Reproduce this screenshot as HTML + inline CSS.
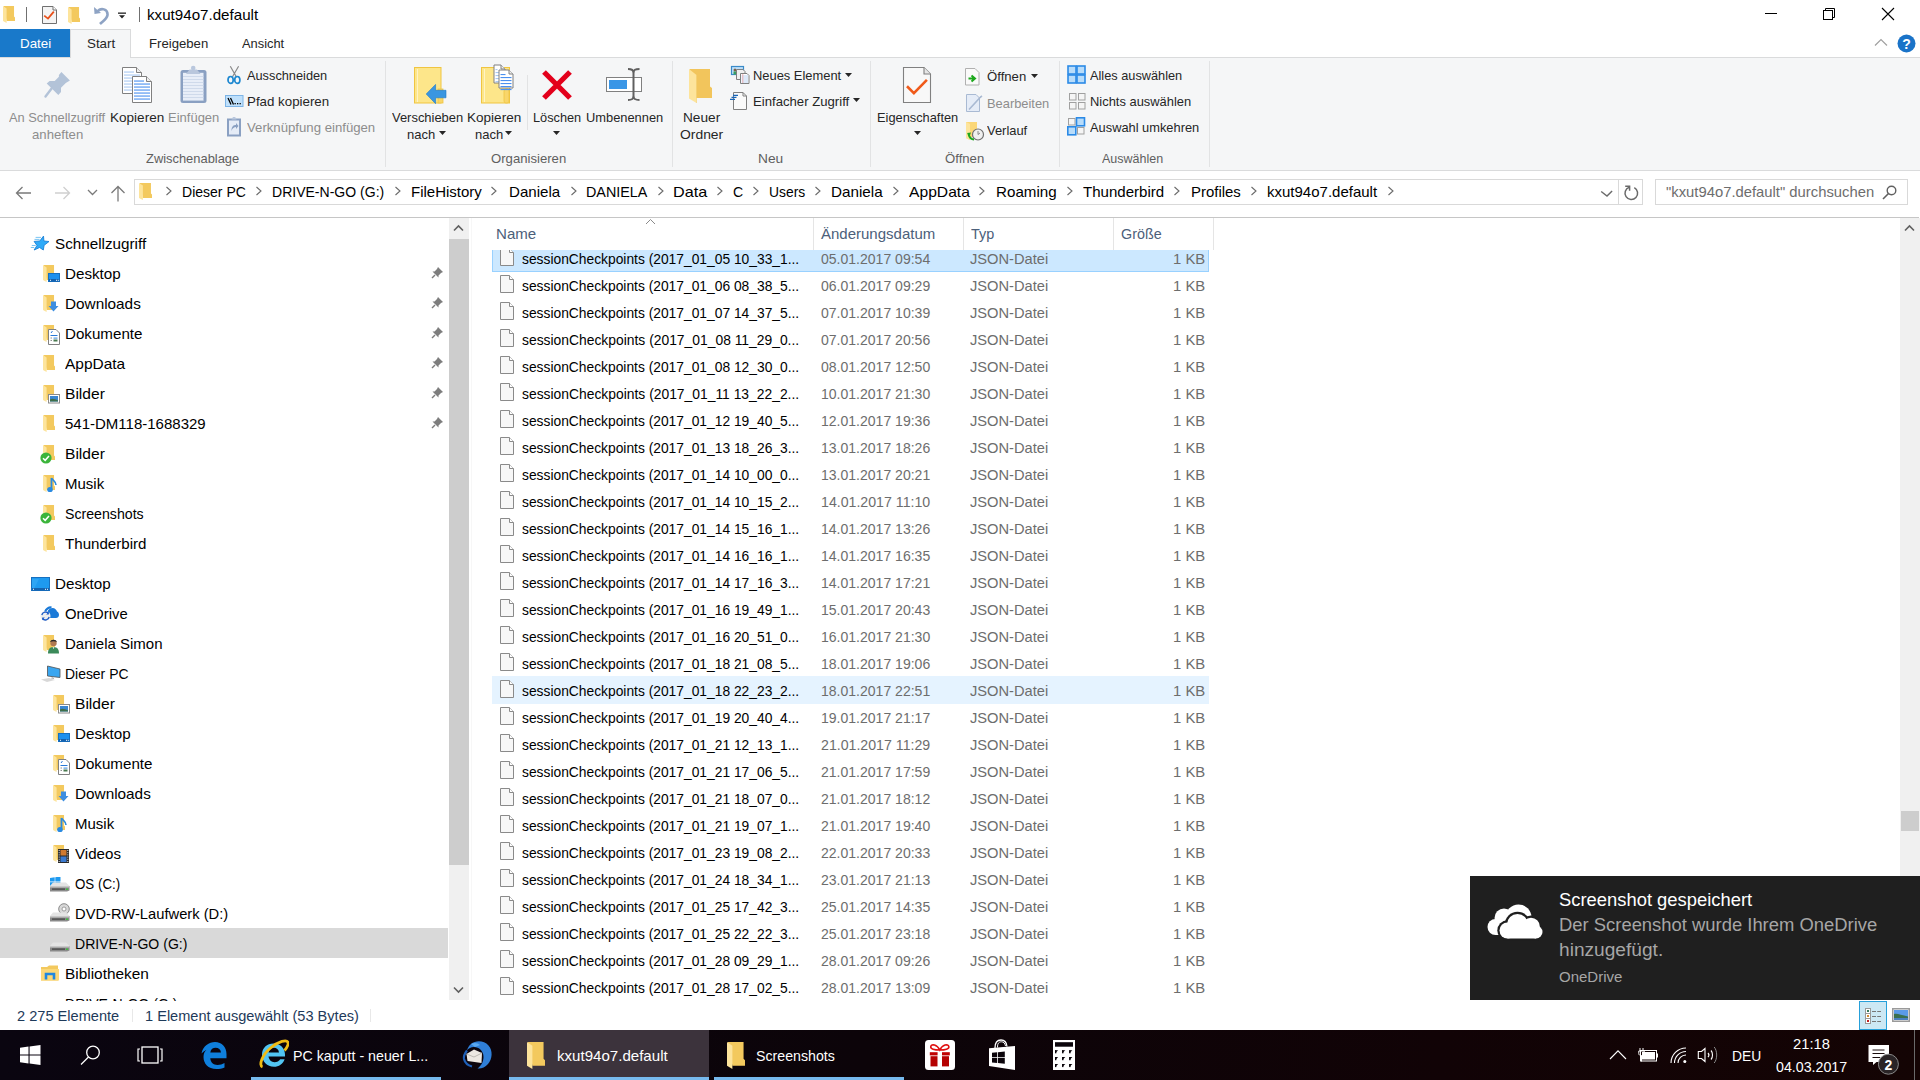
<!DOCTYPE html>
<html><head><meta charset="utf-8"><style>
*{margin:0;padding:0;box-sizing:border-box}
html,body{width:1920px;height:1080px;overflow:hidden;background:#fff;font-family:"Liberation Sans",sans-serif}
.t{position:absolute;white-space:nowrap;transform-origin:0 0}
.r{position:absolute;display:block}
</style></head><body>
<svg class="r" style="left:3px;top:6px" width="12" height="17" viewBox="0 0 12 17"><path d="M0.60 0 H11.04 V10.54 L12.00 11.56 V14.96 H3.60 Z" fill="#f3c95e"/><path d="M0 0 L3.60 2.38 V17.00 L0 14.96 Z" fill="#fde49c"/></svg>
<div class="r" style="left:26px;top:7px;width:1px;height:15px;background:#707070;"></div>
<svg class="r" style="left:42px;top:6px" width="15" height="18" viewBox="0 0 15 18"><path d="M0.5 0.5 H11 L14.5 4 V17.5 H0.5 Z" fill="#f4f4f4" stroke="#707070"/><path d="M11 0.5 V4 H14.5" fill="#fff" stroke="#707070"/><path d="M2.2 9.6 L6 12.6 L11.8 5.6" fill="none" stroke="#e8501a" stroke-width="1.8"/></svg>
<svg class="r" style="left:68px;top:7px" width="12" height="17" viewBox="0 0 12 17"><path d="M0.60 0 H11.04 V10.54 L12.00 11.56 V14.96 H3.60 Z" fill="#f3c95e"/><path d="M0 0 L3.60 2.38 V17.00 L0 14.96 Z" fill="#fde49c"/></svg>
<svg class="r" style="left:93px;top:6px" width="16" height="19" viewBox="0 0 16 19"><path d="M2 3 V9 H8" fill="none" stroke="#8ea3c4" stroke-width="0"/><path d="M1 1 L1.5 8 L8 7 Z" fill="#8ea3c4"/><path d="M4 6 C8 1 15 3 14.5 9 C14 13 10 15 7 18" fill="none" stroke="#8ea3c4" stroke-width="2.6"/></svg>
<svg class="r" style="left:118px;top:12px" width="9" height="8" viewBox="0 0 9 8"><rect x="0" y="0.5" width="8" height="1.3" fill="#222"/><path d="M1 3.3 H7 L4 6.5 Z" fill="#222"/></svg>
<div class="r" style="left:139px;top:7px;width:1px;height:15px;background:#707070;"></div>
<div class="t" style="left:147px;top:7px;font-size:15px;line-height:15px;color:#000;transform:scaleX(1.0100);">kxut94o7.default</div>
<div class="r" style="left:1765px;top:13px;width:12px;height:1px;background:#000;"></div>
<svg class="r" style="left:1822px;top:7px" width="14" height="14" viewBox="0 0 14 14"><rect x="1.5" y="3.5" width="9" height="9" fill="none" stroke="#000"/><path d="M3.5 3.5 V1.5 H12.5 V10.5 H10.5" fill="none" stroke="#000"/></svg>
<svg class="r" style="left:1881px;top:7px" width="14" height="14" viewBox="0 0 14 14"><path d="M1 1 L13 13 M13 1 L1 13" stroke="#000" stroke-width="1.1"/></svg>
<div class="r" style="left:0px;top:29px;width:70px;height:28px;background:#1979ca;"></div>
<div class="t" style="left:20px;top:37px;font-size:13px;line-height:13px;color:#fff;transform:scaleX(1.0277);">Datei</div>
<div class="r" style="left:70px;top:29px;width:61px;height:29px;background:#f5f6f7;border:1px solid #dadbdc;border-bottom:none"></div>
<div class="t" style="left:87px;top:37px;font-size:13px;line-height:13px;color:#262626;transform:scaleX(1.0266);">Start</div>
<div class="t" style="left:149px;top:37px;font-size:13px;line-height:13px;color:#262626;transform:scaleX(1.0112);">Freigeben</div>
<div class="t" style="left:242px;top:37px;font-size:13px;line-height:13px;color:#262626;transform:scaleX(0.9897);">Ansicht</div>
<svg class="r" style="left:1874px;top:38px" width="14" height="9" viewBox="0 0 14 9"><path d="M1 7.5 L7 1.5 L13 7.5" fill="none" stroke="#a0a0a0" stroke-width="1.2"/></svg>
<svg class="r" style="left:1897px;top:34px" width="19" height="19" viewBox="0 0 19 19"><circle cx="9.5" cy="9.5" r="9" fill="#1a73c8"/><text x="9.5" y="15" text-anchor="middle" font-family="Liberation Sans" font-weight="bold" font-size="14" fill="#fff">?</text></svg>
<div class="r" style="left:0px;top:57px;width:1920px;height:114px;background:#f5f6f7;border-top:1px solid #dadbdc;border-bottom:1px solid #dadbdc"></div>
<div class="r" style="left:71px;top:57px;width:59px;height:1px;background:#f5f6f7;"></div>
<div class="t" style="left:9px;top:111px;font-size:13px;line-height:13px;color:#8d8d8d;transform:scaleX(0.9884);">An Schnellzugriff</div>
<div class="t" style="left:32px;top:128px;font-size:13px;line-height:13px;color:#8d8d8d;transform:scaleX(1.0117);">anheften</div>
<div class="t" style="left:110px;top:111px;font-size:13px;line-height:13px;color:#262626;transform:scaleX(1.0414);">Kopieren</div>
<div class="t" style="left:168px;top:111px;font-size:13px;line-height:13px;color:#8d8d8d;">Einfügen</div>
<div class="t" style="left:247px;top:69px;font-size:13px;line-height:13px;color:#262626;transform:scaleX(0.9820);">Ausschneiden</div>
<div class="t" style="left:247px;top:95px;font-size:13px;line-height:13px;color:#262626;transform:scaleX(1.0245);">Pfad kopieren</div>
<div class="t" style="left:247px;top:121px;font-size:13px;line-height:13px;color:#8d8d8d;transform:scaleX(1.0134);">Verknüpfung einfügen</div>
<div class="t" style="left:146px;top:152px;font-size:13px;line-height:13px;color:#5f5f5f;transform:scaleX(0.9920);">Zwischenablage</div>
<div class="r" style="left:385px;top:61px;width:1px;height:106px;background:#e2e3e4;"></div>
<div class="t" style="left:392px;top:111px;font-size:13px;line-height:13px;color:#262626;transform:scaleX(0.9949);">Verschieben</div>
<div class="t" style="left:407px;top:128px;font-size:13px;line-height:13px;color:#262626;">nach</div>
<div class="t" style="left:467px;top:111px;font-size:13px;line-height:13px;color:#262626;transform:scaleX(1.0414);">Kopieren</div>
<div class="t" style="left:475px;top:128px;font-size:13px;line-height:13px;color:#262626;">nach</div>
<div class="r" style="left:527px;top:75px;width:1px;height:55px;background:#e2e3e4;"></div>
<div class="t" style="left:533px;top:111px;font-size:13px;line-height:13px;color:#262626;transform:scaleX(0.9805);">Löschen</div>
<div class="t" style="left:586px;top:111px;font-size:13px;line-height:13px;color:#262626;transform:scaleX(0.9890);">Umbenennen</div>
<div class="t" style="left:491px;top:152px;font-size:13px;line-height:13px;color:#5f5f5f;transform:scaleX(1.0102);">Organisieren</div>
<div class="r" style="left:672px;top:61px;width:1px;height:106px;background:#e2e3e4;"></div>
<div class="t" style="left:683px;top:111px;font-size:13px;line-height:13px;color:#262626;transform:scaleX(1.0502);">Neuer</div>
<div class="t" style="left:680px;top:128px;font-size:13px;line-height:13px;color:#262626;transform:scaleX(1.0675);">Ordner</div>
<div class="t" style="left:753px;top:69px;font-size:13px;line-height:13px;color:#262626;transform:scaleX(0.9922);">Neues Element</div>
<div class="t" style="left:753px;top:95px;font-size:13px;line-height:13px;color:#262626;transform:scaleX(1.0111);">Einfacher Zugriff</div>
<div class="t" style="left:758px;top:152px;font-size:13px;line-height:13px;color:#5f5f5f;transform:scaleX(1.0562);">Neu</div>
<div class="r" style="left:870px;top:61px;width:1px;height:106px;background:#e2e3e4;"></div>
<div class="t" style="left:877px;top:111px;font-size:13px;line-height:13px;color:#262626;transform:scaleX(0.9854);">Eigenschaften</div>
<div class="t" style="left:987px;top:70px;font-size:13px;line-height:13px;color:#262626;transform:scaleX(1.0104);">Öffnen</div>
<div class="t" style="left:987px;top:97px;font-size:13px;line-height:13px;color:#8d8d8d;transform:scaleX(0.9890);">Bearbeiten</div>
<div class="t" style="left:987px;top:124px;font-size:13px;line-height:13px;color:#262626;transform:scaleX(0.9930);">Verlauf</div>
<div class="t" style="left:945px;top:152px;font-size:13px;line-height:13px;color:#5f5f5f;transform:scaleX(1.0104);">Öffnen</div>
<div class="r" style="left:1059px;top:61px;width:1px;height:106px;background:#e2e3e4;"></div>
<div class="t" style="left:1090px;top:69px;font-size:13px;line-height:13px;color:#262626;transform:scaleX(0.9813);">Alles auswählen</div>
<div class="t" style="left:1090px;top:95px;font-size:13px;line-height:13px;color:#262626;transform:scaleX(0.9932);">Nichts auswählen</div>
<div class="t" style="left:1090px;top:121px;font-size:13px;line-height:13px;color:#262626;transform:scaleX(0.9877);">Auswahl umkehren</div>
<div class="t" style="left:1102px;top:152px;font-size:13px;line-height:13px;color:#5f5f5f;transform:scaleX(0.9621);">Auswählen</div>
<div class="r" style="left:1209px;top:61px;width:1px;height:106px;background:#e2e3e4;"></div>
<svg class="r" style="left:40px;top:62px" width="34" height="40" viewBox="0 0 34 40"><path d="M21.4 10 L29.9 18.5 L25.8 21 L21 25.8 L21 30 L18.3 33 L6.7 21.6 L9.6 19.1 L14.7 18.9 L18.9 14.7 L18.9 13 Z" fill="#b3c3d8"/><path d="M12 26 L5.5 34.5" stroke="#b3c3d8" stroke-width="2.4" stroke-linecap="round"/></svg>
<svg class="r" style="left:118px;top:62px" width="40" height="44" viewBox="0 0 40 44"><path d="M4.5 5.5 H18.5 L23.5 10.5 V31.5 H4.5 Z" fill="#fff" stroke="#808080"/><path d="M18.5 5.5 V10.5 H23.5" fill="#eee" stroke="#808080"/><rect x="6" y="9.5" width="10" height="1.1" fill="#a9c9f2"/><rect x="6" y="12.5" width="16" height="1.1" fill="#a9c9f2"/><rect x="6" y="15.5" width="16" height="1.1" fill="#a9c9f2"/><rect x="6" y="18.5" width="16" height="1.1" fill="#a9c9f2"/><rect x="6" y="21.5" width="16" height="1.1" fill="#a9c9f2"/><rect x="6" y="24.5" width="16" height="1.1" fill="#a9c9f2"/><rect x="6" y="27.5" width="16" height="1.1" fill="#a9c9f2"/><path d="M14.5 14.5 H28.5 L33.5 19.5 V40.5 H14.5 Z" fill="#fff" stroke="#808080"/><path d="M28.5 14.5 V19.5 H33.5" fill="#eee" stroke="#808080"/><rect x="16" y="18.5" width="10" height="1.1" fill="#4a90f0"/><rect x="16" y="21.5" width="16" height="1.1" fill="#4a90f0"/><rect x="16" y="24.5" width="16" height="1.1" fill="#4a90f0"/><rect x="16" y="27.5" width="16" height="1.1" fill="#4a90f0"/><rect x="16" y="30.5" width="16" height="1.1" fill="#4a90f0"/><rect x="16" y="33.5" width="16" height="1.1" fill="#4a90f0"/><rect x="16" y="36.5" width="16" height="1.1" fill="#4a90f0"/></svg>
<svg class="r" style="left:180px;top:62px" width="28" height="44" viewBox="0 0 28 44"><rect x="0.5" y="8" width="26" height="33" rx="2.5" fill="#8aa0c2"/><rect x="3" y="10.8" width="20.5" height="27.5" fill="#e8eef8"/><rect x="3" y="14" width="20.5" height="0.8" fill="#c9d5e8"/><rect x="3" y="17" width="20.5" height="0.8" fill="#c9d5e8"/><rect x="3" y="20" width="20.5" height="0.8" fill="#c9d5e8"/><rect x="3" y="23" width="20.5" height="0.8" fill="#c9d5e8"/><rect x="3" y="26" width="20.5" height="0.8" fill="#c9d5e8"/><rect x="3" y="29" width="20.5" height="0.8" fill="#c9d5e8"/><rect x="3" y="32" width="20.5" height="0.8" fill="#c9d5e8"/><rect x="3" y="35" width="20.5" height="0.8" fill="#c9d5e8"/><rect x="3" y="38" width="20.5" height="0.8" fill="#c9d5e8"/><path d="M6 12 L9.5 7.5 H17 L20.5 12 Z" fill="#b9c7dd"/><circle cx="13.2" cy="6" r="2.3" fill="#b9c7dd"/></svg>
<svg class="r" style="left:226px;top:64px" width="16" height="22" viewBox="0 0 16 22"><path d="M4.3 2.3 L10.3 12.8 M12.6 2.3 L6.5 12.8" stroke="#8a8a8a" stroke-width="1.2"/><ellipse cx="4.6" cy="15.9" rx="2.6" ry="3.4" fill="none" stroke="#1e88d0" stroke-width="1.7"/><ellipse cx="11.3" cy="15.9" rx="2.6" ry="3.4" fill="none" stroke="#1e88d0" stroke-width="1.7"/></svg>
<svg class="r" style="left:225px;top:95px" width="19" height="13" viewBox="0 0 19 13"><rect x="0.5" y="0.5" width="17.5" height="11" fill="#bfe0fb" stroke="#7db4e6"/><path d="M3 3 L6 9.5 M5.5 3 L8.5 9.5" stroke="#000" stroke-width="1.3"/><rect x="9.5" y="8" width="1.3" height="1.3" fill="#000"/><rect x="12" y="8" width="1.3" height="1.3" fill="#000"/><rect x="14.5" y="8" width="1.3" height="1.3" fill="#000"/></svg>
<svg class="r" style="left:226px;top:115px" width="16" height="22" viewBox="0 0 16 22"><rect x="1" y="3.5" width="14" height="18" fill="#8aa0c2"/><rect x="3" y="5.5" width="10" height="14" fill="#e5ecf7"/><path d="M5.5 4.5 L7 2 H9.2 L10.5 4.5 Z" fill="#b9c7dd"/><path d="M5.5 16 C5.5 11 7.5 10 10 10 V8 L12.5 11 L10 14 V12 C8 12 6.5 13 5.5 16 Z" fill="#8aa0c2"/></svg>
<svg class="r" style="left:412px;top:65px" width="36" height="41" viewBox="0 0 36 41"><rect x="2.5" y="2.5" width="26.5" height="35.5" fill="#fde68a" stroke="#f0c541"/><path d="M5.5 4 V37" stroke="#fff3c4" stroke-width="1"/><rect x="26" y="24" width="5" height="14" fill="#f9d66a" stroke="#f0c541" stroke-width="0.8"/><path d="M14.2 29 L23.6 19.4 V25.3 H34 V32.8 H23.6 V38.7 Z" fill="#3a96e0" stroke="#1f78c8" stroke-width="0.6"/></svg>
<svg class="r" style="left:479px;top:63px" width="38" height="43" viewBox="0 0 38 43"><rect x="2.5" y="4.5" width="28" height="35.5" fill="#fde68a" stroke="#f0c541"/><path d="M5.5 6 V39" stroke="#fff3c4" stroke-width="1"/><rect x="25" y="26" width="5" height="14" rx="2" fill="#f9d66a" stroke="#f0c541" stroke-width="0.8"/><path d="M15.0 2.0 H22.0 L26.0 6.0 V20.0 H15.0 Z" fill="#fff" stroke="#808080"/><path d="M22.0 2.0 V6.0 H26.0" fill="#eee" stroke="#808080"/><rect x="16.5" y="6.0" width="2" height="1.1" fill="#a9c9f2"/><rect x="16.5" y="9.0" width="8" height="1.1" fill="#a9c9f2"/><rect x="16.5" y="12.0" width="8" height="1.1" fill="#a9c9f2"/><rect x="16.5" y="15.0" width="8" height="1.1" fill="#a9c9f2"/><rect x="16.5" y="18.0" width="8" height="1.1" fill="#a9c9f2"/><path d="M20.0 7.0 H30.0 L34.0 11.0 V25.0 H20.0 Z" fill="#fff" stroke="#808080"/><path d="M30.0 7.0 V11.0 H34.0" fill="#eee" stroke="#808080"/><rect x="21.5" y="11.0" width="5" height="1.1" fill="#4a90f0"/><rect x="21.5" y="14.0" width="11" height="1.1" fill="#4a90f0"/><rect x="21.5" y="17.0" width="11" height="1.1" fill="#4a90f0"/><rect x="21.5" y="20.0" width="11" height="1.1" fill="#4a90f0"/><rect x="21.5" y="23.0" width="11" height="1.1" fill="#4a90f0"/><rect x="21.5" y="26.0" width="11" height="1.1" fill="#4a90f0"/></svg>
<svg class="r" style="left:540px;top:68px" width="34" height="34" viewBox="0 0 34 34"><path d="M4 4 L30 30 M30 4 L4 30" stroke="#e3001b" stroke-width="5.3"/></svg>
<svg class="r" style="left:604px;top:66px" width="40" height="37" viewBox="0 0 40 37"><rect x="2.5" y="11.5" width="35" height="14" fill="#fff" stroke="#808080"/><rect x="5" y="14" width="18" height="9" fill="#3a96e6"/><path d="M29.5 4 V33" stroke="#606060" stroke-width="2"/><path d="M24 3 C27 3 29.5 3.5 29.5 6.5 C29.5 3.5 32 3 35.5 3 M24 34 C27 34 29.5 33.5 29.5 30.5 C29.5 33.5 32 34 35.5 34" fill="none" stroke="#606060" stroke-width="1.8"/></svg>
<svg class="r" style="left:687px;top:67px" width="28" height="38" viewBox="0 0 28 38"><path d="M2.5 2 H23 V19.5 L25 21 V31 H9 Z" fill="#f2c55c"/><path d="M2 2 L9.5 8 V36 L2 31.5 Z" fill="#fde49c"/><path d="M9.5 8 V36" stroke="#f3cf6e" stroke-width="0.6"/></svg>
<svg class="r" style="left:729px;top:64px" width="22" height="22" viewBox="0 0 22 22"><rect x="2.5" y="2.5" width="12" height="8" fill="#bfe0fb" stroke="#3a8ac8" stroke-width="1.2"/><circle cx="6" cy="6" r="1.5" fill="#7a6048"/><rect x="4.5" y="7.5" width="3" height="3" fill="#3aa060"/><path d="M7.5 5.5 H14 L16 7.5 V15.5 H7.5 Z" fill="#f0f0f0" stroke="#808080"/><path d="M11.5 9.5 H18 L20 11.5 V19.5 H11.5 Z" fill="#fff" stroke="#808080"/><path d="M12.5 12 H19 M12.5 14 H19 M12.5 16 H19 M12.5 18 H19" stroke="#a8c8f0" stroke-width="0.8"/><path d="M13.8 10 V19" stroke="#f0a0a0" stroke-width="0.8"/></svg>
<svg class="r" style="left:728px;top:91px" width="20" height="20" viewBox="0 0 20 20"><path d="M5.5 1.5 H15 L18.5 5 V18.5 H5.5 Z" fill="#fafafa" stroke="#808080"/><path d="M15 1.5 V5 H18.5" fill="none" stroke="#808080"/><path d="M5 4.3 H10 M3.5 6.3 H8.5 M2 8.3 H7" stroke="#1a66b8" stroke-width="1.2"/></svg>
<svg class="r" style="left:902px;top:66px" width="30" height="38" viewBox="0 0 30 38"><path d="M1.5 1.5 H22 L28.5 8 V36.5 H1.5 Z" fill="#f8f8f8" stroke="#808080" stroke-width="1.1"/><path d="M22 1.5 V8 H28.5" fill="#e6e6e6" stroke="#808080" stroke-width="1.1"/><path d="M5 20.3 L11.9 27.1 L24.9 13.8" fill="none" stroke="#f05a1a" stroke-width="2.6"/></svg>
<svg class="r" style="left:964px;top:67px" width="18" height="20" viewBox="0 0 18 20"><path d="M1.5 1.5 H11 L15 5.5 V18 H1.5 Z" fill="#fafafa" stroke="#b0b0b0"/><path d="M4.5 11.5 H10 M7.5 8.5 L11 11.5 L7.5 14.5" fill="none" stroke="#1ca81c" stroke-width="2"/></svg>
<svg class="r" style="left:965px;top:93px" width="19" height="20" viewBox="0 0 19 20"><path d="M1.5 1.5 H11 L14.5 5 V18.5 H1.5 Z" fill="#e5ecf7" stroke="#a9bad3"/><path d="M4 16.5 L15.5 4 L17 3" stroke="#a9bad3" stroke-width="1.6"/></svg>
<svg class="r" style="left:964px;top:120px" width="22" height="22" viewBox="0 0 22 22"><path d="M2 2 H13 V17 H6 V20 L2 18 Z" fill="#fbd777"/><path d="M2 2 L6 4 V20 L2 18 Z" fill="#fde49c"/><circle cx="14" cy="14.5" r="5.5" fill="#f0f0f0" stroke="#707070" stroke-width="1.2"/><path d="M14 11 V14.5 L16 13" stroke="#707070" stroke-width="0.8" fill="none"/><path d="M4.5 14 C5.5 18 8 19.5 10 19.5" fill="none" stroke="#1ca81c" stroke-width="2"/><path d="M3 13 L7 12.5 L5.5 16.5 Z" fill="#1ca81c"/></svg>
<svg class="r" style="left:1067px;top:65px" width="20" height="20" viewBox="0 0 20 20"><rect x="1" y="1" width="8" height="8" fill="#b8dcfa" stroke="#2b8ae6" stroke-width="1.6"/><rect x="10" y="1" width="8" height="8" fill="#b8dcfa" stroke="#2b8ae6" stroke-width="1.6"/><rect x="1" y="10" width="8" height="8" fill="#b8dcfa" stroke="#2b8ae6" stroke-width="1.6"/><rect x="10" y="10" width="8" height="8" fill="#b8dcfa" stroke="#2b8ae6" stroke-width="1.6"/></svg>
<svg class="r" style="left:1069px;top:93px" width="17" height="17" viewBox="0 0 17 17"><rect x="0.5" y="0.5" width="6.5" height="6.5" fill="#f5f5f5" stroke="#a0a0a0"/><rect x="9.5" y="0.5" width="6.5" height="6.5" fill="#f5f5f5" stroke="#a0a0a0"/><rect x="0.5" y="9.5" width="6.5" height="6.5" fill="#f5f5f5" stroke="#a0a0a0"/><rect x="9.5" y="9.5" width="6.5" height="6.5" fill="#f5f5f5" stroke="#a0a0a0"/></svg>
<svg class="r" style="left:1067px;top:117px" width="19" height="19" viewBox="0 0 19 19"><rect x="1.5" y="1.5" width="6.5" height="6.5" fill="#f5f5f5" stroke="#a0a0a0"/><rect x="9.5" y="0.8" width="8" height="8" fill="#b8dcfa" stroke="#2b8ae6" stroke-width="1.6"/><rect x="0.8" y="9.8" width="8" height="8" fill="#b8dcfa" stroke="#2b8ae6" stroke-width="1.6"/><rect x="10.5" y="10.5" width="6.5" height="6.5" fill="#f5f5f5" stroke="#a0a0a0"/></svg>
<svg class="r" style="left:439px;top:131px" width="7" height="4" viewBox="0 0 7 4"><path d="M0 0 H7 L3.5 4 Z" fill="#262626"/></svg>
<svg class="r" style="left:505px;top:131px" width="7" height="4" viewBox="0 0 7 4"><path d="M0 0 H7 L3.5 4 Z" fill="#262626"/></svg>
<svg class="r" style="left:553px;top:131px" width="7" height="4" viewBox="0 0 7 4"><path d="M0 0 H7 L3.5 4 Z" fill="#262626"/></svg>
<svg class="r" style="left:914px;top:131px" width="7" height="4" viewBox="0 0 7 4"><path d="M0 0 H7 L3.5 4 Z" fill="#262626"/></svg>
<svg class="r" style="left:845px;top:73px" width="7" height="4" viewBox="0 0 7 4"><path d="M0 0 H7 L3.5 4 Z" fill="#262626"/></svg>
<svg class="r" style="left:853px;top:98px" width="7" height="4" viewBox="0 0 7 4"><path d="M0 0 H7 L3.5 4 Z" fill="#262626"/></svg>
<svg class="r" style="left:1031px;top:74px" width="7" height="4" viewBox="0 0 7 4"><path d="M0 0 H7 L3.5 4 Z" fill="#262626"/></svg>
<svg class="r" style="left:15px;top:186px" width="18" height="14" viewBox="0 0 18 14"><path d="M1.5 7 H16 M7.5 1 L1.5 7 L7.5 13" fill="none" stroke="#7a7a7a" stroke-width="1.3"/></svg>
<svg class="r" style="left:54px;top:186px" width="18" height="14" viewBox="0 0 18 14"><path d="M1 7 H15.5 M9.5 1 L15.5 7 L9.5 13" fill="none" stroke="#cfcfcf" stroke-width="1.3"/></svg>
<svg class="r" style="left:87px;top:189px" width="11" height="7" viewBox="0 0 11 7"><path d="M1 1 L5.5 5.5 L10 1" fill="none" stroke="#7a7a7a" stroke-width="1.3"/></svg>
<svg class="r" style="left:110px;top:185px" width="16" height="17" viewBox="0 0 16 17"><path d="M8 16.5 V1.5 M1.5 8 L8 1.5 L14.5 8" fill="none" stroke="#7a7a7a" stroke-width="1.3"/></svg>
<div class="r" style="left:134px;top:179px;width:1509px;height:26px;background:#fff;border:1px solid #d9d9d9"></div>
<div class="r" style="left:1618px;top:180px;width:1px;height:24px;background:#d9d9d9;"></div>
<svg class="r" style="left:139px;top:183px" width="13" height="17" viewBox="0 0 13 17"><path d="M0.65 0 H11.96 V10.54 L13.00 11.56 V14.96 H3.90 Z" fill="#f3c95e"/><path d="M0 0 L3.90 2.38 V17.00 L0 14.96 Z" fill="#fde49c"/></svg>
<div class="t" style="left:182px;top:184px;font-size:15px;line-height:15px;color:#000;transform:scaleX(0.9348);">Dieser PC</div>
<div class="t" style="left:272px;top:184px;font-size:15px;line-height:15px;color:#000;transform:scaleX(0.9350);">DRIVE-N-GO (G:)</div>
<div class="t" style="left:411px;top:184px;font-size:15px;line-height:15px;color:#000;">FileHistory</div>
<div class="t" style="left:509px;top:184px;font-size:15px;line-height:15px;color:#000;transform:scaleX(1.0064);">Daniela</div>
<div class="t" style="left:586px;top:184px;font-size:15px;line-height:15px;color:#000;transform:scaleX(0.9563);">DANIELA</div>
<div class="t" style="left:673px;top:184px;font-size:15px;line-height:15px;color:#000;transform:scaleX(1.0793);">Data</div>
<div class="t" style="left:733px;top:184px;font-size:15px;line-height:15px;color:#000;transform:scaleX(0.9406);">C</div>
<div class="t" style="left:769px;top:184px;font-size:15px;line-height:15px;color:#000;transform:scaleX(0.9241);">Users</div>
<div class="t" style="left:831px;top:184px;font-size:15px;line-height:15px;color:#000;transform:scaleX(1.0162);">Daniela</div>
<div class="t" style="left:909px;top:184px;font-size:15px;line-height:15px;color:#000;transform:scaleX(1.0433);">AppData</div>
<div class="t" style="left:996px;top:184px;font-size:15px;line-height:15px;color:#000;transform:scaleX(1.0111);">Roaming</div>
<div class="t" style="left:1083px;top:184px;font-size:15px;line-height:15px;color:#000;transform:scaleX(1.0038);">Thunderbird</div>
<div class="t" style="left:1191px;top:184px;font-size:15px;line-height:15px;color:#000;transform:scaleX(0.9954);">Profiles</div>
<div class="t" style="left:1267px;top:184px;font-size:15px;line-height:15px;color:#000;">kxut94o7.default</div>
<svg class="r" style="left:165px;top:186px" width="8" height="10" viewBox="0 0 8 10"><path d="M1.5 1 L6 5 L1.5 9" fill="none" stroke="#6a6a6a" stroke-width="1.1"/></svg>
<svg class="r" style="left:255px;top:186px" width="8" height="10" viewBox="0 0 8 10"><path d="M1.5 1 L6 5 L1.5 9" fill="none" stroke="#6a6a6a" stroke-width="1.1"/></svg>
<svg class="r" style="left:394px;top:186px" width="8" height="10" viewBox="0 0 8 10"><path d="M1.5 1 L6 5 L1.5 9" fill="none" stroke="#6a6a6a" stroke-width="1.1"/></svg>
<svg class="r" style="left:490px;top:186px" width="8" height="10" viewBox="0 0 8 10"><path d="M1.5 1 L6 5 L1.5 9" fill="none" stroke="#6a6a6a" stroke-width="1.1"/></svg>
<svg class="r" style="left:570px;top:186px" width="8" height="10" viewBox="0 0 8 10"><path d="M1.5 1 L6 5 L1.5 9" fill="none" stroke="#6a6a6a" stroke-width="1.1"/></svg>
<svg class="r" style="left:657px;top:186px" width="8" height="10" viewBox="0 0 8 10"><path d="M1.5 1 L6 5 L1.5 9" fill="none" stroke="#6a6a6a" stroke-width="1.1"/></svg>
<svg class="r" style="left:716px;top:186px" width="8" height="10" viewBox="0 0 8 10"><path d="M1.5 1 L6 5 L1.5 9" fill="none" stroke="#6a6a6a" stroke-width="1.1"/></svg>
<svg class="r" style="left:752px;top:186px" width="8" height="10" viewBox="0 0 8 10"><path d="M1.5 1 L6 5 L1.5 9" fill="none" stroke="#6a6a6a" stroke-width="1.1"/></svg>
<svg class="r" style="left:814px;top:186px" width="8" height="10" viewBox="0 0 8 10"><path d="M1.5 1 L6 5 L1.5 9" fill="none" stroke="#6a6a6a" stroke-width="1.1"/></svg>
<svg class="r" style="left:892px;top:186px" width="8" height="10" viewBox="0 0 8 10"><path d="M1.5 1 L6 5 L1.5 9" fill="none" stroke="#6a6a6a" stroke-width="1.1"/></svg>
<svg class="r" style="left:978px;top:186px" width="8" height="10" viewBox="0 0 8 10"><path d="M1.5 1 L6 5 L1.5 9" fill="none" stroke="#6a6a6a" stroke-width="1.1"/></svg>
<svg class="r" style="left:1066px;top:186px" width="8" height="10" viewBox="0 0 8 10"><path d="M1.5 1 L6 5 L1.5 9" fill="none" stroke="#6a6a6a" stroke-width="1.1"/></svg>
<svg class="r" style="left:1173px;top:186px" width="8" height="10" viewBox="0 0 8 10"><path d="M1.5 1 L6 5 L1.5 9" fill="none" stroke="#6a6a6a" stroke-width="1.1"/></svg>
<svg class="r" style="left:1250px;top:186px" width="8" height="10" viewBox="0 0 8 10"><path d="M1.5 1 L6 5 L1.5 9" fill="none" stroke="#6a6a6a" stroke-width="1.1"/></svg>
<svg class="r" style="left:1387px;top:186px" width="8" height="10" viewBox="0 0 8 10"><path d="M1.5 1 L6 5 L1.5 9" fill="none" stroke="#6a6a6a" stroke-width="1.1"/></svg>
<svg class="r" style="left:1600px;top:189px" width="14" height="9" viewBox="0 0 14 9"><path d="M1.2 2.5 L7 7.1 L12.1 1.9" fill="none" stroke="#6a6a6a" stroke-width="1.4"/></svg>
<svg class="r" style="left:1622px;top:184px" width="18" height="18" viewBox="0 0 18 18"><path d="M12.3 3.6 A6.3 6.3 0 1 1 7.2 3.2" fill="none" stroke="#6a6a6a" stroke-width="1.5"/><path d="M3.2 2.3 H7.6 V6.7" fill="none" stroke="#6a6a6a" stroke-width="1.5"/></svg>
<div class="r" style="left:1655px;top:179px;width:253px;height:26px;background:#fff;border:1px solid #d9d9d9"></div>
<div class="t" style="left:1666px;top:184px;font-size:15px;line-height:15px;color:#6d6d6d;transform:scaleX(0.9877);">"kxut94o7.default" durchsuchen</div>
<svg class="r" style="left:1882px;top:185px" width="15" height="15" viewBox="0 0 15 15"><circle cx="9.5" cy="5.5" r="4.3" fill="none" stroke="#606060" stroke-width="1.4"/><path d="M6.5 8.5 L1 14" stroke="#606060" stroke-width="1.6"/></svg>
<div class="r" style="left:0px;top:217px;width:1919px;height:1px;background:#c6c6c6;"></div>
<div class="r" style="left:449px;top:218px;width:20px;height:782px;background:#f0f0f0;"></div>
<div class="r" style="left:471px;top:218px;width:1px;height:782px;background:#f7f7f7;"></div>
<div class="r" style="left:449px;top:239px;width:20px;height:626px;background:#cdcdcd;"></div>
<svg class="r" style="left:453px;top:224px" width="11" height="8" viewBox="0 0 11 8"><path d="M1 6.5 L5.5 2 L10 6.5" fill="none" stroke="#606060" stroke-width="1.6"/></svg>
<svg class="r" style="left:453px;top:986px" width="11" height="8" viewBox="0 0 11 8"><path d="M1 1.5 L5.5 6 L10 1.5" fill="none" stroke="#606060" stroke-width="1.6"/></svg>
<div class="r" style="left:0;top:218px;width:449px;height:783px;overflow:hidden">
<div class="r" style="left:0px;top:710px;width:448px;height:30px;background:#d9d9d9;"></div>
<div class="r" style="left:0;top:-218px;width:449px;height:1080px">
<div class="t" style="left:55px;top:236px;font-size:15px;line-height:15px;color:#000;transform:scaleX(1.0158);">Schnellzugriff</div>
<svg class="r" style="left:28px;top:232px" width="24" height="22" viewBox="0 0 24 22"><path d="M15.5 4.1 L15.9 9 L21 9.5 L16.1 13.3 L15.3 18 L11.6 15.5 L6.1 18 L9 13.5 L6.1 9.4 L11.8 9 Z" fill="#2eaaf8" stroke="#1a7fd6" stroke-width="0.9" stroke-linejoin="round"/><path d="M8 5.4 H12.6 M6.9 7.4 H11.2 M4.2 13.5 H7.3 M3.2 15.5 H5.8" stroke="#6cbdf0" stroke-width="0.9" stroke-linecap="round"/></svg>
<div class="t" style="left:65px;top:266px;font-size:15px;line-height:15px;color:#000;transform:scaleX(1.0122);">Desktop</div>
<svg class="r" style="left:43px;top:265px" width="12" height="17" viewBox="0 0 12 17"><path d="M0.60 0 H11.04 V10.54 L12.00 11.56 V14.96 H3.60 Z" fill="#f3c95e"/><path d="M0 0 L3.60 2.38 V17.00 L0 14.96 Z" fill="#fde49c"/></svg>
<svg class="r" style="left:48px;top:273px" width="12" height="9" viewBox="0 0 12 9"><rect x="0.5" y="0.5" width="11" height="8" fill="#1e90ee" stroke="#1670c0" stroke-width="1"/><rect x="1" y="6" width="10" height="2.5" fill="#1463b0"/><rect x="2" y="6.8" width="1" height="1" fill="#fff"/><rect x="8" y="6.8" width="1" height="1" fill="#fff"/><rect x="9.8" y="6.8" width="1" height="1" fill="#fff"/></svg>
<svg class="r" style="left:431px;top:266px" width="13" height="13" viewBox="0 0 13 13"><path d="M7 1 L12 6 L10 7 L7.5 9.5 L7.5 11.5 L1.5 5.5 L3.5 5.5 L6 3 Z" fill="#7d7d7d"/><path d="M4 9 L1 12" stroke="#7d7d7d" stroke-width="1.5"/></svg>
<div class="t" style="left:65px;top:296px;font-size:15px;line-height:15px;color:#000;transform:scaleX(1.0213);">Downloads</div>
<svg class="r" style="left:43px;top:295px" width="12" height="17" viewBox="0 0 12 17"><path d="M0.60 0 H11.04 V10.54 L12.00 11.56 V14.96 H3.60 Z" fill="#f3c95e"/><path d="M0 0 L3.60 2.38 V17.00 L0 14.96 Z" fill="#fde49c"/></svg>
<svg class="r" style="left:48px;top:301px" width="11" height="11" viewBox="0 0 11 11"><path d="M3 0.5 H8 V5 H10.5 L5.5 10.5 L0.5 5 H3 Z" fill="#3d8ee0"/></svg>
<svg class="r" style="left:431px;top:296px" width="13" height="13" viewBox="0 0 13 13"><path d="M7 1 L12 6 L10 7 L7.5 9.5 L7.5 11.5 L1.5 5.5 L3.5 5.5 L6 3 Z" fill="#7d7d7d"/><path d="M4 9 L1 12" stroke="#7d7d7d" stroke-width="1.5"/></svg>
<div class="t" style="left:65px;top:326px;font-size:15px;line-height:15px;color:#000;transform:scaleX(1.0102);">Dokumente</div>
<svg class="r" style="left:43px;top:325px" width="12" height="17" viewBox="0 0 12 17"><path d="M0.60 0 H11.04 V10.54 L12.00 11.56 V14.96 H3.60 Z" fill="#f3c95e"/><path d="M0 0 L3.60 2.38 V17.00 L0 14.96 Z" fill="#fde49c"/></svg>
<svg class="r" style="left:48px;top:329px" width="12" height="16" viewBox="0 0 12 16"><path d="M0.5 0.5 H8 L11.5 4 V15.5 H0.5 Z" fill="#fff" stroke="#808080"/><path d="M3 4 L4.5 2 M2.5 6.5 H9.5" stroke="#2a7ad8" stroke-width="1"/><path d="M2.5 9 H4 M2.5 11.5 H4" stroke="#909090" stroke-width="1"/><rect x="5.5" y="8.5" width="4" height="1.2" fill="#5a9ae0"/><rect x="5.5" y="10.5" width="4" height="2" fill="#4a7a50"/></svg>
<svg class="r" style="left:431px;top:326px" width="13" height="13" viewBox="0 0 13 13"><path d="M7 1 L12 6 L10 7 L7.5 9.5 L7.5 11.5 L1.5 5.5 L3.5 5.5 L6 3 Z" fill="#7d7d7d"/><path d="M4 9 L1 12" stroke="#7d7d7d" stroke-width="1.5"/></svg>
<div class="t" style="left:65px;top:356px;font-size:15px;line-height:15px;color:#000;transform:scaleX(1.0313);">AppData</div>
<svg class="r" style="left:43px;top:355px" width="12" height="17" viewBox="0 0 12 17"><path d="M0.60 0 H11.04 V10.54 L12.00 11.56 V14.96 H3.60 Z" fill="#f3c95e"/><path d="M0 0 L3.60 2.38 V17.00 L0 14.96 Z" fill="#fde49c"/></svg>
<svg class="r" style="left:431px;top:356px" width="13" height="13" viewBox="0 0 13 13"><path d="M7 1 L12 6 L10 7 L7.5 9.5 L7.5 11.5 L1.5 5.5 L3.5 5.5 L6 3 Z" fill="#7d7d7d"/><path d="M4 9 L1 12" stroke="#7d7d7d" stroke-width="1.5"/></svg>
<div class="t" style="left:65px;top:386px;font-size:15px;line-height:15px;color:#000;transform:scaleX(1.0402);">Bilder</div>
<svg class="r" style="left:43px;top:385px" width="12" height="17" viewBox="0 0 12 17"><path d="M0.60 0 H11.04 V10.54 L12.00 11.56 V14.96 H3.60 Z" fill="#f3c95e"/><path d="M0 0 L3.60 2.38 V17.00 L0 14.96 Z" fill="#fde49c"/></svg>
<svg class="r" style="left:48px;top:394px" width="12" height="10" viewBox="0 0 12 10"><rect x="0.5" y="0.5" width="11" height="8.5" fill="#fff" stroke="#8a8a8a"/><rect x="2" y="2" width="8" height="5.5" fill="#3a86d0"/><path d="M2 5.5 C4 4 7 5 10 6.5 V7.5 H2 Z" fill="#3f6f4a"/></svg>
<svg class="r" style="left:431px;top:386px" width="13" height="13" viewBox="0 0 13 13"><path d="M7 1 L12 6 L10 7 L7.5 9.5 L7.5 11.5 L1.5 5.5 L3.5 5.5 L6 3 Z" fill="#7d7d7d"/><path d="M4 9 L1 12" stroke="#7d7d7d" stroke-width="1.5"/></svg>
<div class="t" style="left:65px;top:416px;font-size:15px;line-height:15px;color:#000;">541-DM118-1688329</div>
<svg class="r" style="left:43px;top:415px" width="12" height="17" viewBox="0 0 12 17"><path d="M0.60 0 H11.04 V10.54 L12.00 11.56 V14.96 H3.60 Z" fill="#f3c95e"/><path d="M0 0 L3.60 2.38 V17.00 L0 14.96 Z" fill="#fde49c"/></svg>
<svg class="r" style="left:431px;top:416px" width="13" height="13" viewBox="0 0 13 13"><path d="M7 1 L12 6 L10 7 L7.5 9.5 L7.5 11.5 L1.5 5.5 L3.5 5.5 L6 3 Z" fill="#7d7d7d"/><path d="M4 9 L1 12" stroke="#7d7d7d" stroke-width="1.5"/></svg>
<div class="t" style="left:65px;top:446px;font-size:15px;line-height:15px;color:#000;transform:scaleX(1.0402);">Bilder</div>
<svg class="r" style="left:43px;top:445px" width="12" height="17" viewBox="0 0 12 17"><path d="M0.60 0 H11.04 V10.54 L12.00 11.56 V14.96 H3.60 Z" fill="#f3c95e"/><path d="M0 0 L3.60 2.38 V17.00 L0 14.96 Z" fill="#fde49c"/></svg>
<svg class="r" style="left:40px;top:452px" width="12" height="12" viewBox="0 0 12 12"><circle cx="6" cy="6" r="5.6" fill="#3bb43b"/><path d="M3 6.2 L5.2 8.3 L9 4" fill="none" stroke="#fff" stroke-width="1.5"/></svg>
<div class="t" style="left:65px;top:476px;font-size:15px;line-height:15px;color:#000;">Musik</div>
<svg class="r" style="left:43px;top:475px" width="12" height="17" viewBox="0 0 12 17"><path d="M0.60 0 H11.04 V10.54 L12.00 11.56 V14.96 H3.60 Z" fill="#f3c95e"/><path d="M0 0 L3.60 2.38 V17.00 L0 14.96 Z" fill="#fde49c"/></svg>
<svg class="r" style="left:47px;top:477px" width="10" height="16" viewBox="0 0 10 16"><path d="M4.5 1 V11.5" stroke="#2a8ae0" stroke-width="1.8"/><path d="M4.5 1 C6 4 9 4 9 8" fill="none" stroke="#2a8ae0" stroke-width="1.6"/><ellipse cx="3" cy="12.5" rx="2.8" ry="2.6" fill="#2a8ae0"/></svg>
<div class="t" style="left:65px;top:506px;font-size:15px;line-height:15px;color:#000;transform:scaleX(0.9438);">Screenshots</div>
<svg class="r" style="left:43px;top:505px" width="12" height="17" viewBox="0 0 12 17"><path d="M0.60 0 H11.04 V10.54 L12.00 11.56 V14.96 H3.60 Z" fill="#f3c95e"/><path d="M0 0 L3.60 2.38 V17.00 L0 14.96 Z" fill="#fde49c"/></svg>
<svg class="r" style="left:40px;top:512px" width="12" height="12" viewBox="0 0 12 12"><circle cx="6" cy="6" r="5.6" fill="#3bb43b"/><path d="M3 6.2 L5.2 8.3 L9 4" fill="none" stroke="#fff" stroke-width="1.5"/></svg>
<div class="t" style="left:65px;top:536px;font-size:15px;line-height:15px;color:#000;transform:scaleX(1.0075);">Thunderbird</div>
<svg class="r" style="left:43px;top:535px" width="12" height="17" viewBox="0 0 12 17"><path d="M0.60 0 H11.04 V10.54 L12.00 11.56 V14.96 H3.60 Z" fill="#f3c95e"/><path d="M0 0 L3.60 2.38 V17.00 L0 14.96 Z" fill="#fde49c"/></svg>
<div class="t" style="left:55px;top:576px;font-size:15px;line-height:15px;color:#000;transform:scaleX(1.0122);">Desktop</div>
<svg class="r" style="left:31px;top:577px" width="19" height="14" viewBox="0 0 19 14"><rect x="0.5" y="0.5" width="18" height="13" fill="#1e9af0" stroke="#1670c0"/><path d="M1 2 L8 2 L3 12 H1 Z" fill="#3eb0f8" opacity="0.5"/><rect x="1" y="11" width="17" height="2.5" fill="#1463b0"/><rect x="2" y="11.8" width="1" height="1" fill="#fff"/><rect x="14" y="11.8" width="1" height="1" fill="#fff"/><rect x="16" y="11.8" width="1" height="1" fill="#fff"/></svg>
<div class="t" style="left:65px;top:606px;font-size:15px;line-height:15px;color:#000;transform:scaleX(0.9896);">OneDrive</div>
<svg class="r" style="left:40px;top:605px" width="19" height="17" viewBox="0 0 19 17"><path d="M7 10 C7 6 9 3 12.5 3 C15 3 16.5 5 17 6.5 C18.5 7 19 8.5 19 10 C19 12 17.5 13 16 13 H9 C7.5 13 7 11.5 7 10 Z" fill="#1a7ad8"/><path d="M5 7 C6 4 9 2 11.5 2.5" fill="none" stroke="#1a7ad8" stroke-width="2.2"/><circle cx="5.5" cy="11" r="5" fill="#eee"/><path d="M1.8 10 A3.8 3.8 0 0 1 8.5 8.5 M9.2 12 A3.8 3.8 0 0 1 2.5 13.5" fill="none" stroke="#1a5ac8" stroke-width="1.3"/><path d="M8.8 6.8 V9.5 H6.2 Z M2.2 15.2 V12.5 H4.8 Z" fill="#1a5ac8"/></svg>
<div class="t" style="left:65px;top:636px;font-size:15px;line-height:15px;color:#000;">Daniela Simon</div>
<svg class="r" style="left:43px;top:635px" width="12" height="17" viewBox="0 0 12 17"><path d="M0.60 0 H11.04 V10.54 L12.00 11.56 V14.96 H3.60 Z" fill="#f3c95e"/><path d="M0 0 L3.60 2.38 V17.00 L0 14.96 Z" fill="#fde49c"/></svg>
<svg class="r" style="left:47px;top:638px" width="12" height="16" viewBox="0 0 12 16"><circle cx="6.5" cy="5" r="3.2" fill="#b07a50"/><path d="M3.2 4 C3.5 1 9.5 1 9.8 4 C8 3 5 3 3.2 4 Z" fill="#2a2a2a"/><path d="M1 15.5 C1 11 3 9 6.5 9 C10 9 12 11 12 15.5 Z" fill="#3c8a5a"/><path d="M5.5 9.2 L6.5 11 L7.5 9.2" fill="#fff"/></svg>
<div class="t" style="left:65px;top:666px;font-size:15px;line-height:15px;color:#000;transform:scaleX(0.9289);">Dieser PC</div>
<svg class="r" style="left:41px;top:665px" width="20" height="18" viewBox="0 0 20 18"><path d="M6.5 1 L19 4 V12.5 L6.5 11 Z" fill="#3aa6f0" stroke="#505050" stroke-width="0.8"/><path d="M11 12 L13 13 V14 L10 13.5" fill="#b0b0b0"/><path d="M0 14.5 L8 13 L14 15 L6 17 Z" fill="#d8d8d8"/></svg>
<div class="t" style="left:75px;top:696px;font-size:15px;line-height:15px;color:#000;transform:scaleX(1.0402);">Bilder</div>
<svg class="r" style="left:53px;top:695px" width="12" height="17" viewBox="0 0 12 17"><path d="M0.60 0 H11.04 V10.54 L12.00 11.56 V14.96 H3.60 Z" fill="#f3c95e"/><path d="M0 0 L3.60 2.38 V17.00 L0 14.96 Z" fill="#fde49c"/></svg>
<svg class="r" style="left:58px;top:704px" width="12" height="10" viewBox="0 0 12 10"><rect x="0.5" y="0.5" width="11" height="8.5" fill="#fff" stroke="#8a8a8a"/><rect x="2" y="2" width="8" height="5.5" fill="#3a86d0"/><path d="M2 5.5 C4 4 7 5 10 6.5 V7.5 H2 Z" fill="#3f6f4a"/></svg>
<div class="t" style="left:75px;top:726px;font-size:15px;line-height:15px;color:#000;transform:scaleX(1.0122);">Desktop</div>
<svg class="r" style="left:53px;top:725px" width="12" height="17" viewBox="0 0 12 17"><path d="M0.60 0 H11.04 V10.54 L12.00 11.56 V14.96 H3.60 Z" fill="#f3c95e"/><path d="M0 0 L3.60 2.38 V17.00 L0 14.96 Z" fill="#fde49c"/></svg>
<svg class="r" style="left:58px;top:733px" width="12" height="9" viewBox="0 0 12 9"><rect x="0.5" y="0.5" width="11" height="8" fill="#1e90ee" stroke="#1670c0" stroke-width="1"/><rect x="1" y="6" width="10" height="2.5" fill="#1463b0"/><rect x="2" y="6.8" width="1" height="1" fill="#fff"/><rect x="8" y="6.8" width="1" height="1" fill="#fff"/><rect x="9.8" y="6.8" width="1" height="1" fill="#fff"/></svg>
<div class="t" style="left:75px;top:756px;font-size:15px;line-height:15px;color:#000;transform:scaleX(1.0102);">Dokumente</div>
<svg class="r" style="left:53px;top:755px" width="12" height="17" viewBox="0 0 12 17"><path d="M0.60 0 H11.04 V10.54 L12.00 11.56 V14.96 H3.60 Z" fill="#f3c95e"/><path d="M0 0 L3.60 2.38 V17.00 L0 14.96 Z" fill="#fde49c"/></svg>
<svg class="r" style="left:58px;top:759px" width="12" height="16" viewBox="0 0 12 16"><path d="M0.5 0.5 H8 L11.5 4 V15.5 H0.5 Z" fill="#fff" stroke="#808080"/><path d="M3 4 L4.5 2 M2.5 6.5 H9.5" stroke="#2a7ad8" stroke-width="1"/><path d="M2.5 9 H4 M2.5 11.5 H4" stroke="#909090" stroke-width="1"/><rect x="5.5" y="8.5" width="4" height="1.2" fill="#5a9ae0"/><rect x="5.5" y="10.5" width="4" height="2" fill="#4a7a50"/></svg>
<div class="t" style="left:75px;top:786px;font-size:15px;line-height:15px;color:#000;transform:scaleX(1.0213);">Downloads</div>
<svg class="r" style="left:53px;top:785px" width="12" height="17" viewBox="0 0 12 17"><path d="M0.60 0 H11.04 V10.54 L12.00 11.56 V14.96 H3.60 Z" fill="#f3c95e"/><path d="M0 0 L3.60 2.38 V17.00 L0 14.96 Z" fill="#fde49c"/></svg>
<svg class="r" style="left:58px;top:791px" width="11" height="11" viewBox="0 0 11 11"><path d="M3 0.5 H8 V5 H10.5 L5.5 10.5 L0.5 5 H3 Z" fill="#3d8ee0"/></svg>
<div class="t" style="left:75px;top:816px;font-size:15px;line-height:15px;color:#000;">Musik</div>
<svg class="r" style="left:53px;top:815px" width="12" height="17" viewBox="0 0 12 17"><path d="M0.60 0 H11.04 V10.54 L12.00 11.56 V14.96 H3.60 Z" fill="#f3c95e"/><path d="M0 0 L3.60 2.38 V17.00 L0 14.96 Z" fill="#fde49c"/></svg>
<svg class="r" style="left:57px;top:817px" width="10" height="16" viewBox="0 0 10 16"><path d="M4.5 1 V11.5" stroke="#2a8ae0" stroke-width="1.8"/><path d="M4.5 1 C6 4 9 4 9 8" fill="none" stroke="#2a8ae0" stroke-width="1.6"/><ellipse cx="3" cy="12.5" rx="2.8" ry="2.6" fill="#2a8ae0"/></svg>
<div class="t" style="left:75px;top:846px;font-size:15px;line-height:15px;color:#000;transform:scaleX(1.0089);">Videos</div>
<svg class="r" style="left:53px;top:845px" width="12" height="17" viewBox="0 0 12 17"><path d="M0.60 0 H11.04 V10.54 L12.00 11.56 V14.96 H3.60 Z" fill="#f3c95e"/><path d="M0 0 L3.60 2.38 V17.00 L0 14.96 Z" fill="#fde49c"/></svg>
<svg class="r" style="left:58px;top:849px" width="12" height="14" viewBox="0 0 12 14"><rect x="0" y="0" width="11" height="14" fill="#2a2a2a"/><rect x="2.5" y="1" width="6" height="5.5" fill="#d07a30"/><rect x="2.5" y="7.5" width="6" height="5.5" fill="#3a7ad0"/><path d="M1.2 1 V13 M9.8 1 V13" stroke="#ddd" stroke-width="1" stroke-dasharray="1 1.2"/></svg>
<div class="t" style="left:75px;top:876px;font-size:15px;line-height:15px;color:#000;transform:scaleX(0.8890);">OS (C:)</div>
<svg class="r" style="left:50px;top:877px" width="11" height="10" viewBox="0 0 11 10"><path d="M0 1 L4.7 0.3 V4.5 H0 Z M5.3 0.2 L10.5 -0.5 V4.5 H5.3 Z M0 5.2 H4.7 V9.5 L0 8.8 Z M5.3 5.2 H10.5 V10.2 L5.3 9.6 Z" fill="#1e9af0"/></svg>
<svg class="r" style="left:50px;top:882px" width="20" height="10" viewBox="0 0 20 10"><path d="M3 0.5 H16 L19.5 4 H0 Z" fill="#e4e4e4"/><path d="M0 4 H19.5 V8.5 L17 9.5 H0 Z" fill="#8a8a8a"/><path d="M0 4 H19.5 V5.5 H0 Z" fill="#c8c8c8"/><rect x="2" y="6.5" width="13" height="1.2" fill="#444"/><rect x="16" y="6.5" width="2" height="1.5" fill="#3cc03c"/></svg>
<div class="t" style="left:75px;top:906px;font-size:15px;line-height:15px;color:#000;transform:scaleX(0.9812);">DVD-RW-Laufwerk (D:)</div>
<svg class="r" style="left:58px;top:903px" width="12" height="12" viewBox="0 0 12 12"><circle cx="6" cy="6" r="5.3" fill="#d8d8d8" stroke="#8a8a8a"/><circle cx="6" cy="6" r="2" fill="#fff" stroke="#8a8a8a" stroke-width="0.8"/></svg>
<svg class="r" style="left:50px;top:912px" width="20" height="10" viewBox="0 0 20 10"><path d="M3 0.5 H16 L19.5 4 H0 Z" fill="#e4e4e4"/><path d="M0 4 H19.5 V8.5 L17 9.5 H0 Z" fill="#8a8a8a"/><path d="M0 4 H19.5 V5.5 H0 Z" fill="#c8c8c8"/><rect x="2" y="6.5" width="13" height="1.2" fill="#444"/><rect x="16" y="6.5" width="2" height="1.5" fill="#3cc03c"/></svg>
<div class="t" style="left:75px;top:936px;font-size:15px;line-height:15px;color:#000;transform:scaleX(0.9367);">DRIVE-N-GO (G:)</div>
<svg class="r" style="left:50px;top:942px" width="20" height="10" viewBox="0 0 20 10"><path d="M3 0.5 H16 L19.5 4 H0 Z" fill="#e4e4e4"/><path d="M0 4 H19.5 V8.5 L17 9.5 H0 Z" fill="#8a8a8a"/><path d="M0 4 H19.5 V5.5 H0 Z" fill="#c8c8c8"/><rect x="2" y="6.5" width="13" height="1.2" fill="#444"/><rect x="16" y="6.5" width="2" height="1.5" fill="#3cc03c"/></svg>
<div class="t" style="left:65px;top:966px;font-size:15px;line-height:15px;color:#000;transform:scaleX(1.0265);">Bibliotheken</div>
<svg class="r" style="left:41px;top:965px" width="18" height="16" viewBox="0 0 18 16"><path d="M0 2 H6 L8 0.5 H17 V15.5 H0 Z" fill="#f3c95e"/><path d="M0 4 H18 V15.5 H0 Z" fill="#fbd877"/><path d="M5 14.5 V9 H13 V14.5" fill="none" stroke="#1e88e0" stroke-width="2.6"/></svg>
<div class="t" style="left:65px;top:996px;font-size:15px;line-height:15px;color:#000;transform:scaleX(0.9367);">DRIVE-N-GO (G:)</div>
</div>
</div>
<div class="r" style="left:470px;top:250px;width:1430px;height:749px;overflow:hidden">
<div class="r" style="left:22px;top:-6px;width:717px;height:28px;background:#cce8ff;border:1px solid #99d1ff"></div>
<svg class="r" style="left:30px;top:-2px" width="14" height="18" viewBox="0 0 14 18"><path d="M0.5 0.5 H9.5 L13.5 4.5 V17.5 H0.5 Z" fill="#f7f7f7" stroke="#8a8a8a" stroke-width="1"/><path d="M9.5 0.5 V4.5 H13.5" fill="#fff" stroke="#8a8a8a" stroke-width="1"/></svg>
<div class="t" style="left:52px;top:1px;font-size:15px;line-height:15px;color:#000;transform:scaleX(0.9207);">sessionCheckpoints (2017_01_05 10_33_1...</div>
<div class="t" style="left:351px;top:1px;font-size:15px;line-height:15px;color:#6d6d6d;transform:scaleX(0.9351);">05.01.2017 09:54</div>
<div class="t" style="left:500px;top:1px;font-size:15px;line-height:15px;color:#6d6d6d;transform:scaleX(0.9771);">JSON-Datei</div>
<div class="t" style="left:703px;top:1px;font-size:15px;line-height:15px;color:#6d6d6d;transform:scaleX(0.9898);">1 KB</div>
<svg class="r" style="left:30px;top:25px" width="14" height="18" viewBox="0 0 14 18"><path d="M0.5 0.5 H9.5 L13.5 4.5 V17.5 H0.5 Z" fill="#f7f7f7" stroke="#8a8a8a" stroke-width="1"/><path d="M9.5 0.5 V4.5 H13.5" fill="#fff" stroke="#8a8a8a" stroke-width="1"/></svg>
<div class="t" style="left:52px;top:28px;font-size:15px;line-height:15px;color:#000;transform:scaleX(0.9207);">sessionCheckpoints (2017_01_06 08_38_5...</div>
<div class="t" style="left:351px;top:28px;font-size:15px;line-height:15px;color:#6d6d6d;transform:scaleX(0.9351);">06.01.2017 09:29</div>
<div class="t" style="left:500px;top:28px;font-size:15px;line-height:15px;color:#6d6d6d;transform:scaleX(0.9771);">JSON-Datei</div>
<div class="t" style="left:703px;top:28px;font-size:15px;line-height:15px;color:#6d6d6d;transform:scaleX(0.9898);">1 KB</div>
<svg class="r" style="left:30px;top:52px" width="14" height="18" viewBox="0 0 14 18"><path d="M0.5 0.5 H9.5 L13.5 4.5 V17.5 H0.5 Z" fill="#f7f7f7" stroke="#8a8a8a" stroke-width="1"/><path d="M9.5 0.5 V4.5 H13.5" fill="#fff" stroke="#8a8a8a" stroke-width="1"/></svg>
<div class="t" style="left:52px;top:55px;font-size:15px;line-height:15px;color:#000;transform:scaleX(0.9207);">sessionCheckpoints (2017_01_07 14_37_5...</div>
<div class="t" style="left:351px;top:55px;font-size:15px;line-height:15px;color:#6d6d6d;transform:scaleX(0.9351);">07.01.2017 10:39</div>
<div class="t" style="left:500px;top:55px;font-size:15px;line-height:15px;color:#6d6d6d;transform:scaleX(0.9771);">JSON-Datei</div>
<div class="t" style="left:703px;top:55px;font-size:15px;line-height:15px;color:#6d6d6d;transform:scaleX(0.9898);">1 KB</div>
<svg class="r" style="left:30px;top:79px" width="14" height="18" viewBox="0 0 14 18"><path d="M0.5 0.5 H9.5 L13.5 4.5 V17.5 H0.5 Z" fill="#f7f7f7" stroke="#8a8a8a" stroke-width="1"/><path d="M9.5 0.5 V4.5 H13.5" fill="#fff" stroke="#8a8a8a" stroke-width="1"/></svg>
<div class="t" style="left:52px;top:82px;font-size:15px;line-height:15px;color:#000;transform:scaleX(0.9241);">sessionCheckpoints (2017_01_08 11_29_0...</div>
<div class="t" style="left:351px;top:82px;font-size:15px;line-height:15px;color:#6d6d6d;transform:scaleX(0.9351);">07.01.2017 20:56</div>
<div class="t" style="left:500px;top:82px;font-size:15px;line-height:15px;color:#6d6d6d;transform:scaleX(0.9771);">JSON-Datei</div>
<div class="t" style="left:703px;top:82px;font-size:15px;line-height:15px;color:#6d6d6d;transform:scaleX(0.9898);">1 KB</div>
<svg class="r" style="left:30px;top:106px" width="14" height="18" viewBox="0 0 14 18"><path d="M0.5 0.5 H9.5 L13.5 4.5 V17.5 H0.5 Z" fill="#f7f7f7" stroke="#8a8a8a" stroke-width="1"/><path d="M9.5 0.5 V4.5 H13.5" fill="#fff" stroke="#8a8a8a" stroke-width="1"/></svg>
<div class="t" style="left:52px;top:109px;font-size:15px;line-height:15px;color:#000;transform:scaleX(0.9207);">sessionCheckpoints (2017_01_08 12_30_0...</div>
<div class="t" style="left:351px;top:109px;font-size:15px;line-height:15px;color:#6d6d6d;transform:scaleX(0.9351);">08.01.2017 12:50</div>
<div class="t" style="left:500px;top:109px;font-size:15px;line-height:15px;color:#6d6d6d;transform:scaleX(0.9771);">JSON-Datei</div>
<div class="t" style="left:703px;top:109px;font-size:15px;line-height:15px;color:#6d6d6d;transform:scaleX(0.9898);">1 KB</div>
<svg class="r" style="left:30px;top:133px" width="14" height="18" viewBox="0 0 14 18"><path d="M0.5 0.5 H9.5 L13.5 4.5 V17.5 H0.5 Z" fill="#f7f7f7" stroke="#8a8a8a" stroke-width="1"/><path d="M9.5 0.5 V4.5 H13.5" fill="#fff" stroke="#8a8a8a" stroke-width="1"/></svg>
<div class="t" style="left:52px;top:136px;font-size:15px;line-height:15px;color:#000;transform:scaleX(0.9241);">sessionCheckpoints (2017_01_11 13_22_2...</div>
<div class="t" style="left:351px;top:136px;font-size:15px;line-height:15px;color:#6d6d6d;transform:scaleX(0.9351);">10.01.2017 21:30</div>
<div class="t" style="left:500px;top:136px;font-size:15px;line-height:15px;color:#6d6d6d;transform:scaleX(0.9771);">JSON-Datei</div>
<div class="t" style="left:703px;top:136px;font-size:15px;line-height:15px;color:#6d6d6d;transform:scaleX(0.9898);">1 KB</div>
<svg class="r" style="left:30px;top:160px" width="14" height="18" viewBox="0 0 14 18"><path d="M0.5 0.5 H9.5 L13.5 4.5 V17.5 H0.5 Z" fill="#f7f7f7" stroke="#8a8a8a" stroke-width="1"/><path d="M9.5 0.5 V4.5 H13.5" fill="#fff" stroke="#8a8a8a" stroke-width="1"/></svg>
<div class="t" style="left:52px;top:163px;font-size:15px;line-height:15px;color:#000;transform:scaleX(0.9207);">sessionCheckpoints (2017_01_12 19_40_5...</div>
<div class="t" style="left:351px;top:163px;font-size:15px;line-height:15px;color:#6d6d6d;transform:scaleX(0.9351);">12.01.2017 19:36</div>
<div class="t" style="left:500px;top:163px;font-size:15px;line-height:15px;color:#6d6d6d;transform:scaleX(0.9771);">JSON-Datei</div>
<div class="t" style="left:703px;top:163px;font-size:15px;line-height:15px;color:#6d6d6d;transform:scaleX(0.9898);">1 KB</div>
<svg class="r" style="left:30px;top:187px" width="14" height="18" viewBox="0 0 14 18"><path d="M0.5 0.5 H9.5 L13.5 4.5 V17.5 H0.5 Z" fill="#f7f7f7" stroke="#8a8a8a" stroke-width="1"/><path d="M9.5 0.5 V4.5 H13.5" fill="#fff" stroke="#8a8a8a" stroke-width="1"/></svg>
<div class="t" style="left:52px;top:190px;font-size:15px;line-height:15px;color:#000;transform:scaleX(0.9207);">sessionCheckpoints (2017_01_13 18_26_3...</div>
<div class="t" style="left:351px;top:190px;font-size:15px;line-height:15px;color:#6d6d6d;transform:scaleX(0.9351);">13.01.2017 18:26</div>
<div class="t" style="left:500px;top:190px;font-size:15px;line-height:15px;color:#6d6d6d;transform:scaleX(0.9771);">JSON-Datei</div>
<div class="t" style="left:703px;top:190px;font-size:15px;line-height:15px;color:#6d6d6d;transform:scaleX(0.9898);">1 KB</div>
<svg class="r" style="left:30px;top:214px" width="14" height="18" viewBox="0 0 14 18"><path d="M0.5 0.5 H9.5 L13.5 4.5 V17.5 H0.5 Z" fill="#f7f7f7" stroke="#8a8a8a" stroke-width="1"/><path d="M9.5 0.5 V4.5 H13.5" fill="#fff" stroke="#8a8a8a" stroke-width="1"/></svg>
<div class="t" style="left:52px;top:217px;font-size:15px;line-height:15px;color:#000;transform:scaleX(0.9207);">sessionCheckpoints (2017_01_14 10_00_0...</div>
<div class="t" style="left:351px;top:217px;font-size:15px;line-height:15px;color:#6d6d6d;transform:scaleX(0.9351);">13.01.2017 20:21</div>
<div class="t" style="left:500px;top:217px;font-size:15px;line-height:15px;color:#6d6d6d;transform:scaleX(0.9771);">JSON-Datei</div>
<div class="t" style="left:703px;top:217px;font-size:15px;line-height:15px;color:#6d6d6d;transform:scaleX(0.9898);">1 KB</div>
<svg class="r" style="left:30px;top:241px" width="14" height="18" viewBox="0 0 14 18"><path d="M0.5 0.5 H9.5 L13.5 4.5 V17.5 H0.5 Z" fill="#f7f7f7" stroke="#8a8a8a" stroke-width="1"/><path d="M9.5 0.5 V4.5 H13.5" fill="#fff" stroke="#8a8a8a" stroke-width="1"/></svg>
<div class="t" style="left:52px;top:244px;font-size:15px;line-height:15px;color:#000;transform:scaleX(0.9207);">sessionCheckpoints (2017_01_14 10_15_2...</div>
<div class="t" style="left:351px;top:244px;font-size:15px;line-height:15px;color:#6d6d6d;transform:scaleX(0.9440);">14.01.2017 11:10</div>
<div class="t" style="left:500px;top:244px;font-size:15px;line-height:15px;color:#6d6d6d;transform:scaleX(0.9771);">JSON-Datei</div>
<div class="t" style="left:703px;top:244px;font-size:15px;line-height:15px;color:#6d6d6d;transform:scaleX(0.9898);">1 KB</div>
<svg class="r" style="left:30px;top:268px" width="14" height="18" viewBox="0 0 14 18"><path d="M0.5 0.5 H9.5 L13.5 4.5 V17.5 H0.5 Z" fill="#f7f7f7" stroke="#8a8a8a" stroke-width="1"/><path d="M9.5 0.5 V4.5 H13.5" fill="#fff" stroke="#8a8a8a" stroke-width="1"/></svg>
<div class="t" style="left:52px;top:271px;font-size:15px;line-height:15px;color:#000;transform:scaleX(0.9207);">sessionCheckpoints (2017_01_14 15_16_1...</div>
<div class="t" style="left:351px;top:271px;font-size:15px;line-height:15px;color:#6d6d6d;transform:scaleX(0.9351);">14.01.2017 13:26</div>
<div class="t" style="left:500px;top:271px;font-size:15px;line-height:15px;color:#6d6d6d;transform:scaleX(0.9771);">JSON-Datei</div>
<div class="t" style="left:703px;top:271px;font-size:15px;line-height:15px;color:#6d6d6d;transform:scaleX(0.9898);">1 KB</div>
<svg class="r" style="left:30px;top:295px" width="14" height="18" viewBox="0 0 14 18"><path d="M0.5 0.5 H9.5 L13.5 4.5 V17.5 H0.5 Z" fill="#f7f7f7" stroke="#8a8a8a" stroke-width="1"/><path d="M9.5 0.5 V4.5 H13.5" fill="#fff" stroke="#8a8a8a" stroke-width="1"/></svg>
<div class="t" style="left:52px;top:298px;font-size:15px;line-height:15px;color:#000;transform:scaleX(0.9207);">sessionCheckpoints (2017_01_14 16_16_1...</div>
<div class="t" style="left:351px;top:298px;font-size:15px;line-height:15px;color:#6d6d6d;transform:scaleX(0.9351);">14.01.2017 16:35</div>
<div class="t" style="left:500px;top:298px;font-size:15px;line-height:15px;color:#6d6d6d;transform:scaleX(0.9771);">JSON-Datei</div>
<div class="t" style="left:703px;top:298px;font-size:15px;line-height:15px;color:#6d6d6d;transform:scaleX(0.9898);">1 KB</div>
<svg class="r" style="left:30px;top:322px" width="14" height="18" viewBox="0 0 14 18"><path d="M0.5 0.5 H9.5 L13.5 4.5 V17.5 H0.5 Z" fill="#f7f7f7" stroke="#8a8a8a" stroke-width="1"/><path d="M9.5 0.5 V4.5 H13.5" fill="#fff" stroke="#8a8a8a" stroke-width="1"/></svg>
<div class="t" style="left:52px;top:325px;font-size:15px;line-height:15px;color:#000;transform:scaleX(0.9207);">sessionCheckpoints (2017_01_14 17_16_3...</div>
<div class="t" style="left:351px;top:325px;font-size:15px;line-height:15px;color:#6d6d6d;transform:scaleX(0.9351);">14.01.2017 17:21</div>
<div class="t" style="left:500px;top:325px;font-size:15px;line-height:15px;color:#6d6d6d;transform:scaleX(0.9771);">JSON-Datei</div>
<div class="t" style="left:703px;top:325px;font-size:15px;line-height:15px;color:#6d6d6d;transform:scaleX(0.9898);">1 KB</div>
<svg class="r" style="left:30px;top:349px" width="14" height="18" viewBox="0 0 14 18"><path d="M0.5 0.5 H9.5 L13.5 4.5 V17.5 H0.5 Z" fill="#f7f7f7" stroke="#8a8a8a" stroke-width="1"/><path d="M9.5 0.5 V4.5 H13.5" fill="#fff" stroke="#8a8a8a" stroke-width="1"/></svg>
<div class="t" style="left:52px;top:352px;font-size:15px;line-height:15px;color:#000;transform:scaleX(0.9207);">sessionCheckpoints (2017_01_16 19_49_1...</div>
<div class="t" style="left:351px;top:352px;font-size:15px;line-height:15px;color:#6d6d6d;transform:scaleX(0.9351);">15.01.2017 20:43</div>
<div class="t" style="left:500px;top:352px;font-size:15px;line-height:15px;color:#6d6d6d;transform:scaleX(0.9771);">JSON-Datei</div>
<div class="t" style="left:703px;top:352px;font-size:15px;line-height:15px;color:#6d6d6d;transform:scaleX(0.9898);">1 KB</div>
<svg class="r" style="left:30px;top:376px" width="14" height="18" viewBox="0 0 14 18"><path d="M0.5 0.5 H9.5 L13.5 4.5 V17.5 H0.5 Z" fill="#f7f7f7" stroke="#8a8a8a" stroke-width="1"/><path d="M9.5 0.5 V4.5 H13.5" fill="#fff" stroke="#8a8a8a" stroke-width="1"/></svg>
<div class="t" style="left:52px;top:379px;font-size:15px;line-height:15px;color:#000;transform:scaleX(0.9207);">sessionCheckpoints (2017_01_16 20_51_0...</div>
<div class="t" style="left:351px;top:379px;font-size:15px;line-height:15px;color:#6d6d6d;transform:scaleX(0.9351);">16.01.2017 21:30</div>
<div class="t" style="left:500px;top:379px;font-size:15px;line-height:15px;color:#6d6d6d;transform:scaleX(0.9771);">JSON-Datei</div>
<div class="t" style="left:703px;top:379px;font-size:15px;line-height:15px;color:#6d6d6d;transform:scaleX(0.9898);">1 KB</div>
<svg class="r" style="left:30px;top:403px" width="14" height="18" viewBox="0 0 14 18"><path d="M0.5 0.5 H9.5 L13.5 4.5 V17.5 H0.5 Z" fill="#f7f7f7" stroke="#8a8a8a" stroke-width="1"/><path d="M9.5 0.5 V4.5 H13.5" fill="#fff" stroke="#8a8a8a" stroke-width="1"/></svg>
<div class="t" style="left:52px;top:406px;font-size:15px;line-height:15px;color:#000;transform:scaleX(0.9207);">sessionCheckpoints (2017_01_18 21_08_5...</div>
<div class="t" style="left:351px;top:406px;font-size:15px;line-height:15px;color:#6d6d6d;transform:scaleX(0.9351);">18.01.2017 19:06</div>
<div class="t" style="left:500px;top:406px;font-size:15px;line-height:15px;color:#6d6d6d;transform:scaleX(0.9771);">JSON-Datei</div>
<div class="t" style="left:703px;top:406px;font-size:15px;line-height:15px;color:#6d6d6d;transform:scaleX(0.9898);">1 KB</div>
<div class="r" style="left:22px;top:426px;width:717px;height:28px;background:#e5f3ff;"></div>
<svg class="r" style="left:30px;top:430px" width="14" height="18" viewBox="0 0 14 18"><path d="M0.5 0.5 H9.5 L13.5 4.5 V17.5 H0.5 Z" fill="#f7f7f7" stroke="#8a8a8a" stroke-width="1"/><path d="M9.5 0.5 V4.5 H13.5" fill="#fff" stroke="#8a8a8a" stroke-width="1"/></svg>
<div class="t" style="left:52px;top:433px;font-size:15px;line-height:15px;color:#000;transform:scaleX(0.9207);">sessionCheckpoints (2017_01_18 22_23_2...</div>
<div class="t" style="left:351px;top:433px;font-size:15px;line-height:15px;color:#6d6d6d;transform:scaleX(0.9351);">18.01.2017 22:51</div>
<div class="t" style="left:500px;top:433px;font-size:15px;line-height:15px;color:#6d6d6d;transform:scaleX(0.9771);">JSON-Datei</div>
<div class="t" style="left:703px;top:433px;font-size:15px;line-height:15px;color:#6d6d6d;transform:scaleX(0.9898);">1 KB</div>
<svg class="r" style="left:30px;top:457px" width="14" height="18" viewBox="0 0 14 18"><path d="M0.5 0.5 H9.5 L13.5 4.5 V17.5 H0.5 Z" fill="#f7f7f7" stroke="#8a8a8a" stroke-width="1"/><path d="M9.5 0.5 V4.5 H13.5" fill="#fff" stroke="#8a8a8a" stroke-width="1"/></svg>
<div class="t" style="left:52px;top:460px;font-size:15px;line-height:15px;color:#000;transform:scaleX(0.9207);">sessionCheckpoints (2017_01_19 20_40_4...</div>
<div class="t" style="left:351px;top:460px;font-size:15px;line-height:15px;color:#6d6d6d;transform:scaleX(0.9351);">19.01.2017 21:17</div>
<div class="t" style="left:500px;top:460px;font-size:15px;line-height:15px;color:#6d6d6d;transform:scaleX(0.9771);">JSON-Datei</div>
<div class="t" style="left:703px;top:460px;font-size:15px;line-height:15px;color:#6d6d6d;transform:scaleX(0.9898);">1 KB</div>
<svg class="r" style="left:30px;top:484px" width="14" height="18" viewBox="0 0 14 18"><path d="M0.5 0.5 H9.5 L13.5 4.5 V17.5 H0.5 Z" fill="#f7f7f7" stroke="#8a8a8a" stroke-width="1"/><path d="M9.5 0.5 V4.5 H13.5" fill="#fff" stroke="#8a8a8a" stroke-width="1"/></svg>
<div class="t" style="left:52px;top:487px;font-size:15px;line-height:15px;color:#000;transform:scaleX(0.9207);">sessionCheckpoints (2017_01_21 12_13_1...</div>
<div class="t" style="left:351px;top:487px;font-size:15px;line-height:15px;color:#6d6d6d;transform:scaleX(0.9440);">21.01.2017 11:29</div>
<div class="t" style="left:500px;top:487px;font-size:15px;line-height:15px;color:#6d6d6d;transform:scaleX(0.9771);">JSON-Datei</div>
<div class="t" style="left:703px;top:487px;font-size:15px;line-height:15px;color:#6d6d6d;transform:scaleX(0.9898);">1 KB</div>
<svg class="r" style="left:30px;top:511px" width="14" height="18" viewBox="0 0 14 18"><path d="M0.5 0.5 H9.5 L13.5 4.5 V17.5 H0.5 Z" fill="#f7f7f7" stroke="#8a8a8a" stroke-width="1"/><path d="M9.5 0.5 V4.5 H13.5" fill="#fff" stroke="#8a8a8a" stroke-width="1"/></svg>
<div class="t" style="left:52px;top:514px;font-size:15px;line-height:15px;color:#000;transform:scaleX(0.9207);">sessionCheckpoints (2017_01_21 17_06_5...</div>
<div class="t" style="left:351px;top:514px;font-size:15px;line-height:15px;color:#6d6d6d;transform:scaleX(0.9351);">21.01.2017 17:59</div>
<div class="t" style="left:500px;top:514px;font-size:15px;line-height:15px;color:#6d6d6d;transform:scaleX(0.9771);">JSON-Datei</div>
<div class="t" style="left:703px;top:514px;font-size:15px;line-height:15px;color:#6d6d6d;transform:scaleX(0.9898);">1 KB</div>
<svg class="r" style="left:30px;top:538px" width="14" height="18" viewBox="0 0 14 18"><path d="M0.5 0.5 H9.5 L13.5 4.5 V17.5 H0.5 Z" fill="#f7f7f7" stroke="#8a8a8a" stroke-width="1"/><path d="M9.5 0.5 V4.5 H13.5" fill="#fff" stroke="#8a8a8a" stroke-width="1"/></svg>
<div class="t" style="left:52px;top:541px;font-size:15px;line-height:15px;color:#000;transform:scaleX(0.9207);">sessionCheckpoints (2017_01_21 18_07_0...</div>
<div class="t" style="left:351px;top:541px;font-size:15px;line-height:15px;color:#6d6d6d;transform:scaleX(0.9351);">21.01.2017 18:12</div>
<div class="t" style="left:500px;top:541px;font-size:15px;line-height:15px;color:#6d6d6d;transform:scaleX(0.9771);">JSON-Datei</div>
<div class="t" style="left:703px;top:541px;font-size:15px;line-height:15px;color:#6d6d6d;transform:scaleX(0.9898);">1 KB</div>
<svg class="r" style="left:30px;top:565px" width="14" height="18" viewBox="0 0 14 18"><path d="M0.5 0.5 H9.5 L13.5 4.5 V17.5 H0.5 Z" fill="#f7f7f7" stroke="#8a8a8a" stroke-width="1"/><path d="M9.5 0.5 V4.5 H13.5" fill="#fff" stroke="#8a8a8a" stroke-width="1"/></svg>
<div class="t" style="left:52px;top:568px;font-size:15px;line-height:15px;color:#000;transform:scaleX(0.9207);">sessionCheckpoints (2017_01_21 19_07_1...</div>
<div class="t" style="left:351px;top:568px;font-size:15px;line-height:15px;color:#6d6d6d;transform:scaleX(0.9351);">21.01.2017 19:40</div>
<div class="t" style="left:500px;top:568px;font-size:15px;line-height:15px;color:#6d6d6d;transform:scaleX(0.9771);">JSON-Datei</div>
<div class="t" style="left:703px;top:568px;font-size:15px;line-height:15px;color:#6d6d6d;transform:scaleX(0.9898);">1 KB</div>
<svg class="r" style="left:30px;top:592px" width="14" height="18" viewBox="0 0 14 18"><path d="M0.5 0.5 H9.5 L13.5 4.5 V17.5 H0.5 Z" fill="#f7f7f7" stroke="#8a8a8a" stroke-width="1"/><path d="M9.5 0.5 V4.5 H13.5" fill="#fff" stroke="#8a8a8a" stroke-width="1"/></svg>
<div class="t" style="left:52px;top:595px;font-size:15px;line-height:15px;color:#000;transform:scaleX(0.9207);">sessionCheckpoints (2017_01_23 19_08_2...</div>
<div class="t" style="left:351px;top:595px;font-size:15px;line-height:15px;color:#6d6d6d;transform:scaleX(0.9351);">22.01.2017 20:33</div>
<div class="t" style="left:500px;top:595px;font-size:15px;line-height:15px;color:#6d6d6d;transform:scaleX(0.9771);">JSON-Datei</div>
<div class="t" style="left:703px;top:595px;font-size:15px;line-height:15px;color:#6d6d6d;transform:scaleX(0.9898);">1 KB</div>
<svg class="r" style="left:30px;top:619px" width="14" height="18" viewBox="0 0 14 18"><path d="M0.5 0.5 H9.5 L13.5 4.5 V17.5 H0.5 Z" fill="#f7f7f7" stroke="#8a8a8a" stroke-width="1"/><path d="M9.5 0.5 V4.5 H13.5" fill="#fff" stroke="#8a8a8a" stroke-width="1"/></svg>
<div class="t" style="left:52px;top:622px;font-size:15px;line-height:15px;color:#000;transform:scaleX(0.9207);">sessionCheckpoints (2017_01_24 18_34_1...</div>
<div class="t" style="left:351px;top:622px;font-size:15px;line-height:15px;color:#6d6d6d;transform:scaleX(0.9351);">23.01.2017 21:13</div>
<div class="t" style="left:500px;top:622px;font-size:15px;line-height:15px;color:#6d6d6d;transform:scaleX(0.9771);">JSON-Datei</div>
<div class="t" style="left:703px;top:622px;font-size:15px;line-height:15px;color:#6d6d6d;transform:scaleX(0.9898);">1 KB</div>
<svg class="r" style="left:30px;top:646px" width="14" height="18" viewBox="0 0 14 18"><path d="M0.5 0.5 H9.5 L13.5 4.5 V17.5 H0.5 Z" fill="#f7f7f7" stroke="#8a8a8a" stroke-width="1"/><path d="M9.5 0.5 V4.5 H13.5" fill="#fff" stroke="#8a8a8a" stroke-width="1"/></svg>
<div class="t" style="left:52px;top:649px;font-size:15px;line-height:15px;color:#000;transform:scaleX(0.9207);">sessionCheckpoints (2017_01_25 17_42_3...</div>
<div class="t" style="left:351px;top:649px;font-size:15px;line-height:15px;color:#6d6d6d;transform:scaleX(0.9351);">25.01.2017 14:35</div>
<div class="t" style="left:500px;top:649px;font-size:15px;line-height:15px;color:#6d6d6d;transform:scaleX(0.9771);">JSON-Datei</div>
<div class="t" style="left:703px;top:649px;font-size:15px;line-height:15px;color:#6d6d6d;transform:scaleX(0.9898);">1 KB</div>
<svg class="r" style="left:30px;top:673px" width="14" height="18" viewBox="0 0 14 18"><path d="M0.5 0.5 H9.5 L13.5 4.5 V17.5 H0.5 Z" fill="#f7f7f7" stroke="#8a8a8a" stroke-width="1"/><path d="M9.5 0.5 V4.5 H13.5" fill="#fff" stroke="#8a8a8a" stroke-width="1"/></svg>
<div class="t" style="left:52px;top:676px;font-size:15px;line-height:15px;color:#000;transform:scaleX(0.9207);">sessionCheckpoints (2017_01_25 22_22_3...</div>
<div class="t" style="left:351px;top:676px;font-size:15px;line-height:15px;color:#6d6d6d;transform:scaleX(0.9351);">25.01.2017 23:18</div>
<div class="t" style="left:500px;top:676px;font-size:15px;line-height:15px;color:#6d6d6d;transform:scaleX(0.9771);">JSON-Datei</div>
<div class="t" style="left:703px;top:676px;font-size:15px;line-height:15px;color:#6d6d6d;transform:scaleX(0.9898);">1 KB</div>
<svg class="r" style="left:30px;top:700px" width="14" height="18" viewBox="0 0 14 18"><path d="M0.5 0.5 H9.5 L13.5 4.5 V17.5 H0.5 Z" fill="#f7f7f7" stroke="#8a8a8a" stroke-width="1"/><path d="M9.5 0.5 V4.5 H13.5" fill="#fff" stroke="#8a8a8a" stroke-width="1"/></svg>
<div class="t" style="left:52px;top:703px;font-size:15px;line-height:15px;color:#000;transform:scaleX(0.9207);">sessionCheckpoints (2017_01_28 09_29_1...</div>
<div class="t" style="left:351px;top:703px;font-size:15px;line-height:15px;color:#6d6d6d;transform:scaleX(0.9351);">28.01.2017 09:26</div>
<div class="t" style="left:500px;top:703px;font-size:15px;line-height:15px;color:#6d6d6d;transform:scaleX(0.9771);">JSON-Datei</div>
<div class="t" style="left:703px;top:703px;font-size:15px;line-height:15px;color:#6d6d6d;transform:scaleX(0.9898);">1 KB</div>
<svg class="r" style="left:30px;top:727px" width="14" height="18" viewBox="0 0 14 18"><path d="M0.5 0.5 H9.5 L13.5 4.5 V17.5 H0.5 Z" fill="#f7f7f7" stroke="#8a8a8a" stroke-width="1"/><path d="M9.5 0.5 V4.5 H13.5" fill="#fff" stroke="#8a8a8a" stroke-width="1"/></svg>
<div class="t" style="left:52px;top:730px;font-size:15px;line-height:15px;color:#000;transform:scaleX(0.9207);">sessionCheckpoints (2017_01_28 17_02_5...</div>
<div class="t" style="left:351px;top:730px;font-size:15px;line-height:15px;color:#6d6d6d;transform:scaleX(0.9351);">28.01.2017 13:09</div>
<div class="t" style="left:500px;top:730px;font-size:15px;line-height:15px;color:#6d6d6d;transform:scaleX(0.9771);">JSON-Datei</div>
<div class="t" style="left:703px;top:730px;font-size:15px;line-height:15px;color:#6d6d6d;transform:scaleX(0.9898);">1 KB</div>
</div>
<div class="t" style="left:496px;top:226px;font-size:15px;line-height:15px;color:#4c607a;transform:scaleX(1.0046);">Name</div>
<div class="t" style="left:821px;top:226px;font-size:15px;line-height:15px;color:#4c607a;">Änderungsdatum</div>
<div class="t" style="left:971px;top:226px;font-size:15px;line-height:15px;color:#4c607a;transform:scaleX(0.9592);">Typ</div>
<div class="t" style="left:1121px;top:226px;font-size:15px;line-height:15px;color:#4c607a;transform:scaleX(0.9549);">Größe</div>
<div class="r" style="left:813px;top:218px;width:1px;height:32px;background:#e5e5e5;"></div>
<div class="r" style="left:963px;top:218px;width:1px;height:32px;background:#e5e5e5;"></div>
<div class="r" style="left:1113px;top:218px;width:1px;height:32px;background:#e5e5e5;"></div>
<div class="r" style="left:1213px;top:218px;width:1px;height:32px;background:#e5e5e5;"></div>
<svg class="r" style="left:645px;top:218px" width="11" height="7" viewBox="0 0 11 7"><path d="M1 6 L5.5 1.5 L10 6" fill="none" stroke="#8a8a8a" stroke-width="1"/></svg>
<div class="r" style="left:1900px;top:218px;width:20px;height:781px;background:#f0f0f0;"></div>
<div class="r" style="left:1901px;top:811px;width:18px;height:20px;background:#cdcdcd;"></div>
<svg class="r" style="left:1904px;top:224px" width="11" height="8" viewBox="0 0 11 8"><path d="M1 6.5 L5.5 2 L10 6.5" fill="none" stroke="#606060" stroke-width="1.6"/></svg>
<div class="t" style="left:17px;top:1008px;font-size:15px;line-height:15px;color:#1e3a5a;transform:scaleX(0.9726);">2 275 Elemente</div>
<div class="r" style="left:132px;top:1009px;width:1px;height:13px;background:#e8e8e8;"></div>
<div class="t" style="left:145px;top:1008px;font-size:15px;line-height:15px;color:#1e3a5a;transform:scaleX(0.9717);">1 Element ausgewählt (53 Bytes)</div>
<div class="r" style="left:370px;top:1009px;width:1px;height:13px;background:#e8e8e8;"></div>
<div class="r" style="left:1859px;top:1001px;width:28px;height:29px;background:#cce8f4;border:1px solid #26a0da"></div>
<svg class="r" style="left:1864px;top:1007px" width="20" height="18" viewBox="0 0 20 18"><rect x="1.5" y="1.5" width="5" height="15" fill="#fff" stroke="#999" stroke-width="1"/><path d="M1.5 6.5 H6.5 M1.5 11.5 H6.5" stroke="#999" stroke-width="1"/><rect x="3" y="3" width="2" height="2" fill="#3a7a5a"/><rect x="3" y="8" width="2" height="2" fill="#d08a30"/><rect x="3" y="13" width="2" height="2" fill="#c02020"/><path d="M8 4.5 H12 M13.2 4.5 H17 M8 9.5 H12 M13.2 9.5 H17 M8 14.5 H12 M13.2 14.5 H17" stroke="#777" stroke-width="1.2"/></svg>
<svg class="r" style="left:1892px;top:1008px" width="18" height="14" viewBox="0 0 18 14"><rect x="0.75" y="0.75" width="16.5" height="12.5" fill="#fff" stroke="#9a9a9a" stroke-width="1.5"/><rect x="2" y="2" width="14" height="10" fill="#5a9ae8"/><path d="M2 6 C5 5 9 7 16 8.5 V12 H2 Z" fill="#3a7050"/><rect x="2" y="10" width="14" height="2" fill="#4a80c0"/></svg>
<div class="r" style="left:1470px;top:876px;width:450px;height:124px;background:#1f1f1f;"></div>
<svg class="r" style="left:1480px;top:895px" width="66" height="48" viewBox="0 0 66 48"><circle cx="15.5" cy="32" r="8" fill="#fff"/><circle cx="24" cy="23" r="9.5" fill="#fff"/><circle cx="38.5" cy="22.5" r="13" fill="#fff"/><rect x="15.5" y="28" width="23" height="12" fill="#fff"/><circle cx="27.5" cy="35.5" r="10.2" fill="#1f1f1f"/><circle cx="37.5" cy="29.5" r="12.7" fill="#1f1f1f"/><circle cx="51" cy="31.5" r="11.0" fill="#1f1f1f"/><circle cx="56" cy="37" r="8.7" fill="#1f1f1f"/><rect x="25.3" y="35" width="33" height="10.7" fill="#1f1f1f"/><circle cx="27.5" cy="35.5" r="8" fill="#fff"/><circle cx="37.5" cy="29.5" r="10.5" fill="#fff"/><circle cx="51" cy="31.5" r="8.8" fill="#fff"/><circle cx="56" cy="37" r="6.5" fill="#fff"/><rect x="27.5" y="35" width="28.5" height="8.5" fill="#fff"/></svg>
<div class="t" style="left:1559px;top:891px;font-size:18px;line-height:18px;color:#ffffff;transform:scaleX(1.0215);">Screenshot gespeichert</div>
<div class="t" style="left:1559px;top:916px;font-size:18px;line-height:18px;color:#a6a6a6;transform:scaleX(1.0227);">Der Screenshot wurde Ihrem OneDrive</div>
<div class="t" style="left:1559px;top:941px;font-size:18px;line-height:18px;color:#a6a6a6;transform:scaleX(1.0624);">hinzugefügt.</div>
<div class="t" style="left:1559px;top:969px;font-size:15px;line-height:15px;color:#a6a6a6;">OneDrive</div>
<div class="r" style="left:0px;top:1030px;width:1920px;height:50px;background:linear-gradient(90deg,#0a0510 0%,#0c0409 45%,#110306 75%,#140404 100%);"></div>
<svg class="r" style="left:20px;top:1045px" width="21" height="20" viewBox="0 0 21 20"><path d="M0 2.8 L8.5 1.6 V9.4 H0Z M9.6 1.4 L20.5 0 V9.4 H9.6Z M0 10.6 H8.5 V18.4 L0 17.2Z M9.6 10.6 H20.5 V20 L9.6 18.6Z" fill="#fff"/></svg>
<svg class="r" style="left:80px;top:1045px" width="21" height="20" viewBox="0 0 21 20"><circle cx="13" cy="7.5" r="6.3" fill="none" stroke="#fff" stroke-width="1.3"/><path d="M8.5 12 L1 19.5" stroke="#fff" stroke-width="1.3"/></svg>
<svg class="r" style="left:137px;top:1046px" width="26" height="18" viewBox="0 0 26 18"><rect x="5" y="1" width="16" height="16" fill="none" stroke="#fff" stroke-width="1.3"/><path d="M3 3 H1 V15 H3 M23 3 H25 V15 H23" fill="none" stroke="#fff" stroke-width="1.2"/></svg>
<svg class="r" style="left:200px;top:1041px" width="28" height="29" viewBox="0 0 28 29"><path fill-rule="evenodd" fill="#0f7fdc" d="M1.5 12.5 C3 5 9 1 15 1 C22 1 26.5 6 26.5 13 V17.3 H10.3 C10.5 21.5 13.5 24 17.5 24 C20 24 22.5 23.2 24.5 22 V26.5 C22 27.7 19.5 28 16.5 28 C8 28 3.5 22.5 3.5 16 C3.5 13 4.5 10.5 6.5 8.8 C4.5 9.8 2.8 11 1.5 12.5 Z M10.3 11.4 C10.8 8.2 13 6.8 15.6 6.8 C18.5 6.8 20.8 8.5 21 11.4 Z"/></svg>
<div class="r" style="left:251px;top:1077px;width:190px;height:3px;background:#76b9ed;"></div>
<svg class="r" style="left:258px;top:1039px" width="31" height="30" viewBox="0 0 31 30"><path fill-rule="evenodd" fill="#52c4f2" d="M4 15.5 C4 9 9 4.5 15.5 4.5 C22 4.5 27 9 27 15.5 V17.5 H10.5 C11 21 13.5 23.2 16.5 23.2 C19 23.2 21 22 22.2 20.2 H26.6 C25 25 20.8 27.8 16 27.8 C9 27.8 4 22.5 4 15.5 Z M10.6 13.5 H21 C20.6 10.3 18.5 8.8 15.8 8.8 C13 8.8 11 10.5 10.6 13.5 Z"/><path d="M4.5 28 C0.5 26.5 4 16 12.5 9 C21 2 28.5 0.5 29.8 3 C30.8 5 29 8.5 26.5 11.5" fill="none" stroke="#f0bc14" stroke-width="2.8"/></svg>
<div class="t" style="left:293px;top:1048px;font-size:15px;line-height:15px;color:#fff;transform:scaleX(0.9483);">PC kaputt - neuer L...</div>
<svg class="r" style="left:462px;top:1039px" width="31" height="31" viewBox="0 0 31 31"><path d="M9 5 C14 1 22 1.5 26.5 6.5 C31 11.5 30.5 20 26 25 C23 28.5 19 30 15.5 29.5 C19 27 21.5 23 21.5 18 C21.5 12 17 8 12 8 C9 8 6.5 9.5 5 11.5 C5.5 9 7 6.5 9 5 Z" fill="#2f7fd8"/><path d="M5 11.5 C3 14 1.5 17 2 20 C3 24 6 26.5 10 27.5" fill="none" stroke="#1e5fb8" stroke-width="2.2"/><path d="M4.5 15 L12 10.5 L20 14 L19.5 24 L5.5 22 Z" fill="#ece8e2"/><path d="M4.5 15 L12 18 L20 14" fill="none" stroke="#b8b4ae" stroke-width="0.9"/><path d="M9 5 C12 3 16 4 18 6 L13 8 Z" fill="#5aa8f0"/></svg>
<div class="r" style="left:509px;top:1030px;width:200px;height:50px;background:#3c333c;"></div>
<div class="r" style="left:509px;top:1077px;width:200px;height:3px;background:#76b9ed;"></div>
<svg class="r" style="left:527px;top:1042px" width="18" height="27" viewBox="0 0 18 27"><path d="M0.90 0 H16.56 V16.74 L18.00 18.36 V23.76 H5.40 Z" fill="#f3c95e"/><path d="M0 0 L5.40 3.78 V27.00 L0 23.76 Z" fill="#fde49c"/></svg>
<div class="t" style="left:557px;top:1048px;font-size:15px;line-height:15px;color:#fff;transform:scaleX(1.0055);">kxut94o7.default</div>
<div class="r" style="left:714px;top:1077px;width:190px;height:3px;background:#76b9ed;"></div>
<svg class="r" style="left:727px;top:1042px" width="18" height="27" viewBox="0 0 18 27"><path d="M0.90 0 H16.56 V16.74 L18.00 18.36 V23.76 H5.40 Z" fill="#f3c95e"/><path d="M0 0 L5.40 3.78 V27.00 L0 23.76 Z" fill="#fde49c"/></svg>
<div class="t" style="left:756px;top:1048px;font-size:15px;line-height:15px;color:#fff;transform:scaleX(0.9450);">Screenshots</div>
<svg class="r" style="left:925px;top:1040px" width="30" height="30" viewBox="0 0 30 30"><rect x="0" y="0" width="30" height="30" rx="3.5" fill="#fff"/><rect x="4.8" y="12.2" width="7.8" height="3.2" fill="#c00000"/><rect x="17" y="12.2" width="7.8" height="3.2" fill="#c00000"/><rect x="5.5" y="16.2" width="7" height="10.2" fill="#b50000"/><rect x="17" y="16.2" width="7" height="10.2" fill="#b50000"/><path d="M14.8 10 C12 4.5 6.5 3.5 5.8 6.5 C5.2 9 9.5 10 14.8 10 C20 10 24.5 9 23.8 6.5 C23 3.5 17.5 4.5 14.8 10 Z" fill="none" stroke="#e01010" stroke-width="1.6"/></svg>
<svg class="r" style="left:987px;top:1038px" width="30" height="33" viewBox="0 0 30 33"><path d="M8 10 C8 4 11 2 14 2 C17 2 19.5 4 20 8.5" fill="none" stroke="#fff" stroke-width="1.3"/><path d="M10.5 9.5 C10.5 5 12 3.8 14.5 3.8 C16.5 3.8 18 5 18.5 8" fill="none" stroke="#fff" stroke-width="1"/><path d="M2 10.3 L28 8 V32 L2 28 Z" fill="#fff"/><path d="M5 14.8 L10.2 14.3 V19.2 H5 Z M11 14.2 L17.8 13.6 V19.2 H11 Z M5 20 H10.2 V25 L5 24.4 Z M11 20 H17.8 V25.8 L11 25.1 Z" fill="#0b050b"/></svg>
<svg class="r" style="left:1053px;top:1040px" width="22" height="30" viewBox="0 0 22 30"><rect x="0" y="0" width="22" height="30" fill="#fff"/><rect x="2" y="2.2" width="18" height="4.5" fill="#0b050b"/><path d="M2.0 10.2 H5.2 L2.0 13.3 Z" fill="#0b050b"/><rect x="2.0" y="10.2" width="1.4" height="3.1" fill="#0b050b"/><path d="M9.1 10.2 H12.3 L9.1 13.3 Z" fill="#0b050b"/><rect x="9.1" y="10.2" width="1.4" height="3.1" fill="#0b050b"/><path d="M16.2 10.2 H19.4 L16.2 13.3 Z" fill="#0b050b"/><rect x="16.2" y="10.2" width="1.4" height="3.1" fill="#0b050b"/><path d="M2.0 17.1 H5.2 L2.0 20.2 Z" fill="#0b050b"/><rect x="2.0" y="17.1" width="1.4" height="3.1" fill="#0b050b"/><path d="M9.1 17.1 H12.3 L9.1 20.2 Z" fill="#0b050b"/><rect x="9.1" y="17.1" width="1.4" height="3.1" fill="#0b050b"/><path d="M16.2 17.1 H19.4 L16.2 20.2 Z" fill="#0b050b"/><rect x="16.2" y="17.1" width="1.4" height="3.1" fill="#0b050b"/><path d="M2.0 24.0 H5.2 L2.0 27.1 Z" fill="#0b050b"/><rect x="2.0" y="24.0" width="1.4" height="3.1" fill="#0b050b"/><path d="M9.1 24.0 H12.3 L9.1 27.1 Z" fill="#0b050b"/><rect x="9.1" y="24.0" width="1.4" height="3.1" fill="#0b050b"/><path d="M16.2 24.0 H19.4 L16.2 27.1 Z" fill="#0b050b"/><rect x="16.2" y="24.0" width="1.4" height="3.1" fill="#0b050b"/></svg>
<svg class="r" style="left:1609px;top:1049px" width="18" height="11" viewBox="0 0 18 11"><path d="M1 10 L9 1.8 L17 10" fill="none" stroke="#fff" stroke-width="1.1"/></svg>
<svg class="r" style="left:1637px;top:1047px" width="22" height="15" viewBox="0 0 22 15"><path d="M3 1 V4 M6 1 V4 M1.8 4 H7.2 V6.5 C7.2 8 6 8.5 4.5 8.5 C3 8.5 1.8 8 1.8 6.5 Z M4.5 8.5 V14.5" fill="none" stroke="#fff" stroke-width="1"/><rect x="3.5" y="3.5" width="16" height="10.5" fill="none" stroke="#fff" stroke-width="1"/><rect x="5" y="5" width="13" height="7.5" fill="#fff"/><rect x="19.5" y="6.5" width="1.5" height="4" fill="#fff"/></svg>
<svg class="r" style="left:1670px;top:1047px" width="18" height="17" viewBox="0 0 18 17"><path d="M1 16 A15 15 0 0 1 16 1 M4.5 16 A11.5 11.5 0 0 1 16 4.5 M8 16 A8 8 0 0 1 16 8" fill="none" stroke="#fff" stroke-width="1.1"/><circle cx="14.8" cy="14.6" r="1.5" fill="#fff"/></svg>
<svg class="r" style="left:1697px;top:1045px" width="23" height="20" viewBox="0 0 23 20"><path d="M1.3 6.5 H4.5 L8 3.5 V16.5 L4.5 13.5 H1.3 Z" fill="none" stroke="#fff" stroke-width="1.1"/><path d="M11 8 C12 9 12 11 11 12.2 M14 5.5 C16 7.5 16 12.5 14 14.5" fill="none" stroke="#fff" stroke-width="1.1"/><path d="M17.2 2 C20.5 6 20.5 14 17.2 18" fill="none" stroke="#8a8a8a" stroke-width="1"/></svg>
<div class="t" style="left:1732px;top:1048px;font-size:15px;line-height:15px;color:#fff;transform:scaleX(0.9220);">DEU</div>
<div class="t" style="left:1793px;top:1036px;font-size:15px;line-height:15px;color:#fff;transform:scaleX(0.9828);">21:18</div>
<div class="t" style="left:1776px;top:1059px;font-size:15px;line-height:15px;color:#fff;transform:scaleX(0.9483);">04.03.2017</div>
<svg class="r" style="left:1866px;top:1043px" width="34" height="33" viewBox="0 0 34 33"><path d="M2.5 2 H23 V19 H10.5 L7 22 V19 H2.5 Z" fill="#fff"/><path d="M6.5 7 H18.5 M6.5 10.5 H18.5 M6.5 14.5 H14" stroke="#1a0d0d" stroke-width="1"/><circle cx="22.4" cy="21.2" r="10" fill="#2a2426" stroke="#8a8a8a" stroke-width="1"/><text x="22.4" y="26.5" text-anchor="middle" font-family="Liberation Sans" font-weight="bold" font-size="14" fill="#fff">2</text></svg>
<div class="r" style="left:1914px;top:1030px;width:1px;height:50px;background:#6a6a6a;"></div>
</body></html>
